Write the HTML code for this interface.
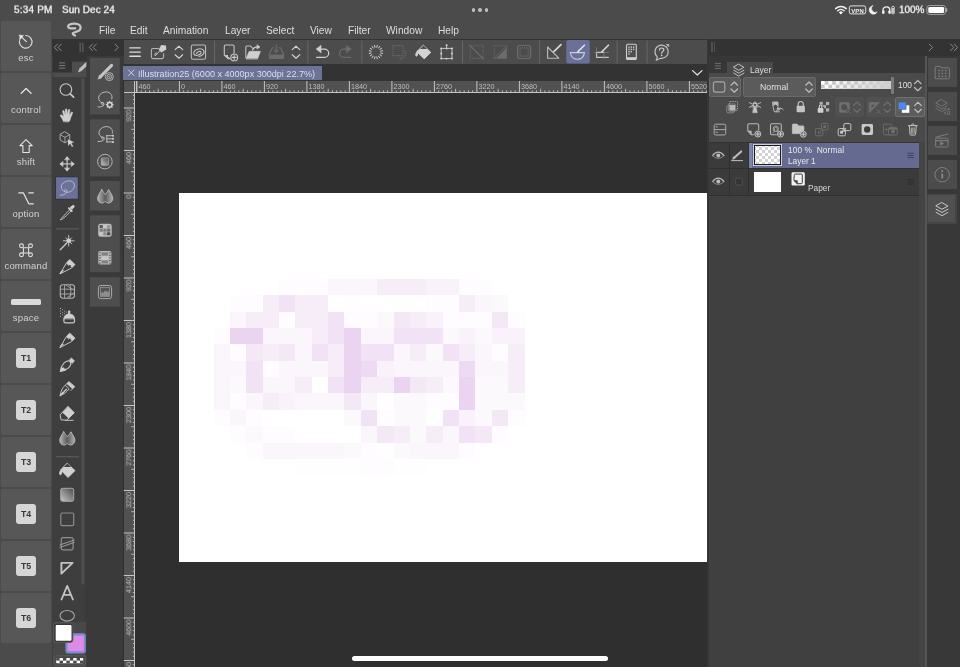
<!DOCTYPE html>
<html><head><meta charset="utf-8"><title>Clip Studio Paint</title>
<style>
html,body{margin:0;padding:0;background:#303030;}
body{width:960px;height:667px;position:relative;overflow:hidden;font-family:"Liberation Sans",sans-serif;}
#r{position:absolute;left:0;top:0;width:960px;height:667px;overflow:hidden;background:#303030;}
#r div,#r svg{position:absolute;}
#r div{box-sizing:border-box;}
.t{white-space:nowrap;line-height:1;will-change:transform;}
svg{overflow:visible;}
#r svg text{will-change:transform;}
#r svg.tx{will-change:transform;}
</style></head><body><div id="r">
<div style="left:0px;top:0px;width:960px;height:39px;background:#4b4b4b;"></div>
<div style="left:0px;top:39px;width:52px;height:628px;background:#4b4b4b;"></div>
<div style="left:52px;top:39px;width:908px;height:28px;background:#333333;"></div>
<div style="left:52px;top:56px;width:35px;height:611px;background:#3e3e3e;"></div>
<div style="left:85px;top:56px;width:39px;height:611px;background:#3a3a3a;"></div>
<div style="left:123px;top:64px;width:585px;height:603px;background:#2f2f2f;"></div>
<div style="left:123.5px;top:40px;width:584px;height:24px;background:#4c4c4c;"></div>
<div style="left:123px;top:64px;width:585px;height:17px;background:#333333;"></div>
<div style="left:122.8px;top:66.2px;width:199px;height:14.2px;background:#6d7397;"></div>
<div style="left:123.5px;top:81px;width:583.5px;height:12px;background:#515151;"></div>
<div style="left:123.5px;top:81px;width:11.5px;height:586px;background:#515151;"></div>
<div style="left:123.5px;top:91.7px;width:583.5px;height:1px;background:#c4c4c4;"></div>
<div style="left:134px;top:81px;width:1px;height:586px;background:#c4c4c4;"></div>
<div style="left:136px;top:81px;width:1px;height:11px;background:#c4c4c4;"></div>
<svg style="left:0px;top:0px;clip-path:inset(0 0 0 0);overflow:hidden;" width="707" height="100" viewBox="0 0 707 100"><rect x="136.40" y="81" width="1" height="11" fill="#c4c4c4"/><rect x="140.70" y="90.40" width="0.9" height="1.6" fill="#c4c4c4"/><rect x="144.95" y="90.40" width="0.9" height="1.6" fill="#c4c4c4"/><rect x="149.20" y="90.40" width="0.9" height="1.6" fill="#c4c4c4"/><rect x="153.45" y="90.40" width="0.9" height="1.6" fill="#c4c4c4"/><rect x="157.70" y="88.80" width="0.9" height="3.2" fill="#c4c4c4"/><rect x="161.95" y="90.40" width="0.9" height="1.6" fill="#c4c4c4"/><rect x="166.20" y="90.40" width="0.9" height="1.6" fill="#c4c4c4"/><rect x="170.45" y="90.40" width="0.9" height="1.6" fill="#c4c4c4"/><rect x="174.70" y="90.40" width="0.9" height="1.6" fill="#c4c4c4"/><text x="138.50" y="89.2" font-size="7.2" fill="#bdbdbd" font-family="Liberation Sans">460</text><rect x="178.90" y="81" width="1" height="11" fill="#c4c4c4"/><rect x="183.20" y="90.40" width="0.9" height="1.6" fill="#c4c4c4"/><rect x="187.45" y="90.40" width="0.9" height="1.6" fill="#c4c4c4"/><rect x="191.70" y="90.40" width="0.9" height="1.6" fill="#c4c4c4"/><rect x="195.95" y="90.40" width="0.9" height="1.6" fill="#c4c4c4"/><rect x="200.20" y="88.80" width="0.9" height="3.2" fill="#c4c4c4"/><rect x="204.45" y="90.40" width="0.9" height="1.6" fill="#c4c4c4"/><rect x="208.70" y="90.40" width="0.9" height="1.6" fill="#c4c4c4"/><rect x="212.95" y="90.40" width="0.9" height="1.6" fill="#c4c4c4"/><rect x="217.20" y="90.40" width="0.9" height="1.6" fill="#c4c4c4"/><text x="181.00" y="89.2" font-size="7.2" fill="#bdbdbd" font-family="Liberation Sans">0</text><rect x="221.40" y="81" width="1" height="11" fill="#c4c4c4"/><rect x="225.70" y="90.40" width="0.9" height="1.6" fill="#c4c4c4"/><rect x="229.95" y="90.40" width="0.9" height="1.6" fill="#c4c4c4"/><rect x="234.20" y="90.40" width="0.9" height="1.6" fill="#c4c4c4"/><rect x="238.45" y="90.40" width="0.9" height="1.6" fill="#c4c4c4"/><rect x="242.70" y="88.80" width="0.9" height="3.2" fill="#c4c4c4"/><rect x="246.95" y="90.40" width="0.9" height="1.6" fill="#c4c4c4"/><rect x="251.20" y="90.40" width="0.9" height="1.6" fill="#c4c4c4"/><rect x="255.45" y="90.40" width="0.9" height="1.6" fill="#c4c4c4"/><rect x="259.70" y="90.40" width="0.9" height="1.6" fill="#c4c4c4"/><text x="223.50" y="89.2" font-size="7.2" fill="#bdbdbd" font-family="Liberation Sans">460</text><rect x="263.90" y="81" width="1" height="11" fill="#c4c4c4"/><rect x="268.20" y="90.40" width="0.9" height="1.6" fill="#c4c4c4"/><rect x="272.45" y="90.40" width="0.9" height="1.6" fill="#c4c4c4"/><rect x="276.70" y="90.40" width="0.9" height="1.6" fill="#c4c4c4"/><rect x="280.95" y="90.40" width="0.9" height="1.6" fill="#c4c4c4"/><rect x="285.20" y="88.80" width="0.9" height="3.2" fill="#c4c4c4"/><rect x="289.45" y="90.40" width="0.9" height="1.6" fill="#c4c4c4"/><rect x="293.70" y="90.40" width="0.9" height="1.6" fill="#c4c4c4"/><rect x="297.95" y="90.40" width="0.9" height="1.6" fill="#c4c4c4"/><rect x="302.20" y="90.40" width="0.9" height="1.6" fill="#c4c4c4"/><text x="266.00" y="89.2" font-size="7.2" fill="#bdbdbd" font-family="Liberation Sans">920</text><rect x="306.40" y="81" width="1" height="11" fill="#c4c4c4"/><rect x="310.70" y="90.40" width="0.9" height="1.6" fill="#c4c4c4"/><rect x="314.95" y="90.40" width="0.9" height="1.6" fill="#c4c4c4"/><rect x="319.20" y="90.40" width="0.9" height="1.6" fill="#c4c4c4"/><rect x="323.45" y="90.40" width="0.9" height="1.6" fill="#c4c4c4"/><rect x="327.70" y="88.80" width="0.9" height="3.2" fill="#c4c4c4"/><rect x="331.95" y="90.40" width="0.9" height="1.6" fill="#c4c4c4"/><rect x="336.20" y="90.40" width="0.9" height="1.6" fill="#c4c4c4"/><rect x="340.45" y="90.40" width="0.9" height="1.6" fill="#c4c4c4"/><rect x="344.70" y="90.40" width="0.9" height="1.6" fill="#c4c4c4"/><text x="308.50" y="89.2" font-size="7.2" fill="#bdbdbd" font-family="Liberation Sans">1380</text><rect x="348.90" y="81" width="1" height="11" fill="#c4c4c4"/><rect x="353.20" y="90.40" width="0.9" height="1.6" fill="#c4c4c4"/><rect x="357.45" y="90.40" width="0.9" height="1.6" fill="#c4c4c4"/><rect x="361.70" y="90.40" width="0.9" height="1.6" fill="#c4c4c4"/><rect x="365.95" y="90.40" width="0.9" height="1.6" fill="#c4c4c4"/><rect x="370.20" y="88.80" width="0.9" height="3.2" fill="#c4c4c4"/><rect x="374.45" y="90.40" width="0.9" height="1.6" fill="#c4c4c4"/><rect x="378.70" y="90.40" width="0.9" height="1.6" fill="#c4c4c4"/><rect x="382.95" y="90.40" width="0.9" height="1.6" fill="#c4c4c4"/><rect x="387.20" y="90.40" width="0.9" height="1.6" fill="#c4c4c4"/><text x="351.00" y="89.2" font-size="7.2" fill="#bdbdbd" font-family="Liberation Sans">1840</text><rect x="391.40" y="81" width="1" height="11" fill="#c4c4c4"/><rect x="395.70" y="90.40" width="0.9" height="1.6" fill="#c4c4c4"/><rect x="399.95" y="90.40" width="0.9" height="1.6" fill="#c4c4c4"/><rect x="404.20" y="90.40" width="0.9" height="1.6" fill="#c4c4c4"/><rect x="408.45" y="90.40" width="0.9" height="1.6" fill="#c4c4c4"/><rect x="412.70" y="88.80" width="0.9" height="3.2" fill="#c4c4c4"/><rect x="416.95" y="90.40" width="0.9" height="1.6" fill="#c4c4c4"/><rect x="421.20" y="90.40" width="0.9" height="1.6" fill="#c4c4c4"/><rect x="425.45" y="90.40" width="0.9" height="1.6" fill="#c4c4c4"/><rect x="429.70" y="90.40" width="0.9" height="1.6" fill="#c4c4c4"/><text x="393.50" y="89.2" font-size="7.2" fill="#bdbdbd" font-family="Liberation Sans">2300</text><rect x="433.90" y="81" width="1" height="11" fill="#c4c4c4"/><rect x="438.20" y="90.40" width="0.9" height="1.6" fill="#c4c4c4"/><rect x="442.45" y="90.40" width="0.9" height="1.6" fill="#c4c4c4"/><rect x="446.70" y="90.40" width="0.9" height="1.6" fill="#c4c4c4"/><rect x="450.95" y="90.40" width="0.9" height="1.6" fill="#c4c4c4"/><rect x="455.20" y="88.80" width="0.9" height="3.2" fill="#c4c4c4"/><rect x="459.45" y="90.40" width="0.9" height="1.6" fill="#c4c4c4"/><rect x="463.70" y="90.40" width="0.9" height="1.6" fill="#c4c4c4"/><rect x="467.95" y="90.40" width="0.9" height="1.6" fill="#c4c4c4"/><rect x="472.20" y="90.40" width="0.9" height="1.6" fill="#c4c4c4"/><text x="436.00" y="89.2" font-size="7.2" fill="#bdbdbd" font-family="Liberation Sans">2760</text><rect x="476.40" y="81" width="1" height="11" fill="#c4c4c4"/><rect x="480.70" y="90.40" width="0.9" height="1.6" fill="#c4c4c4"/><rect x="484.95" y="90.40" width="0.9" height="1.6" fill="#c4c4c4"/><rect x="489.20" y="90.40" width="0.9" height="1.6" fill="#c4c4c4"/><rect x="493.45" y="90.40" width="0.9" height="1.6" fill="#c4c4c4"/><rect x="497.70" y="88.80" width="0.9" height="3.2" fill="#c4c4c4"/><rect x="501.95" y="90.40" width="0.9" height="1.6" fill="#c4c4c4"/><rect x="506.20" y="90.40" width="0.9" height="1.6" fill="#c4c4c4"/><rect x="510.45" y="90.40" width="0.9" height="1.6" fill="#c4c4c4"/><rect x="514.70" y="90.40" width="0.9" height="1.6" fill="#c4c4c4"/><text x="478.50" y="89.2" font-size="7.2" fill="#bdbdbd" font-family="Liberation Sans">3220</text><rect x="518.90" y="81" width="1" height="11" fill="#c4c4c4"/><rect x="523.20" y="90.40" width="0.9" height="1.6" fill="#c4c4c4"/><rect x="527.45" y="90.40" width="0.9" height="1.6" fill="#c4c4c4"/><rect x="531.70" y="90.40" width="0.9" height="1.6" fill="#c4c4c4"/><rect x="535.95" y="90.40" width="0.9" height="1.6" fill="#c4c4c4"/><rect x="540.20" y="88.80" width="0.9" height="3.2" fill="#c4c4c4"/><rect x="544.45" y="90.40" width="0.9" height="1.6" fill="#c4c4c4"/><rect x="548.70" y="90.40" width="0.9" height="1.6" fill="#c4c4c4"/><rect x="552.95" y="90.40" width="0.9" height="1.6" fill="#c4c4c4"/><rect x="557.20" y="90.40" width="0.9" height="1.6" fill="#c4c4c4"/><text x="521.00" y="89.2" font-size="7.2" fill="#bdbdbd" font-family="Liberation Sans">3680</text><rect x="561.40" y="81" width="1" height="11" fill="#c4c4c4"/><rect x="565.70" y="90.40" width="0.9" height="1.6" fill="#c4c4c4"/><rect x="569.95" y="90.40" width="0.9" height="1.6" fill="#c4c4c4"/><rect x="574.20" y="90.40" width="0.9" height="1.6" fill="#c4c4c4"/><rect x="578.45" y="90.40" width="0.9" height="1.6" fill="#c4c4c4"/><rect x="582.70" y="88.80" width="0.9" height="3.2" fill="#c4c4c4"/><rect x="586.95" y="90.40" width="0.9" height="1.6" fill="#c4c4c4"/><rect x="591.20" y="90.40" width="0.9" height="1.6" fill="#c4c4c4"/><rect x="595.45" y="90.40" width="0.9" height="1.6" fill="#c4c4c4"/><rect x="599.70" y="90.40" width="0.9" height="1.6" fill="#c4c4c4"/><text x="563.50" y="89.2" font-size="7.2" fill="#bdbdbd" font-family="Liberation Sans">4140</text><rect x="603.90" y="81" width="1" height="11" fill="#c4c4c4"/><rect x="608.20" y="90.40" width="0.9" height="1.6" fill="#c4c4c4"/><rect x="612.45" y="90.40" width="0.9" height="1.6" fill="#c4c4c4"/><rect x="616.70" y="90.40" width="0.9" height="1.6" fill="#c4c4c4"/><rect x="620.95" y="90.40" width="0.9" height="1.6" fill="#c4c4c4"/><rect x="625.20" y="88.80" width="0.9" height="3.2" fill="#c4c4c4"/><rect x="629.45" y="90.40" width="0.9" height="1.6" fill="#c4c4c4"/><rect x="633.70" y="90.40" width="0.9" height="1.6" fill="#c4c4c4"/><rect x="637.95" y="90.40" width="0.9" height="1.6" fill="#c4c4c4"/><rect x="642.20" y="90.40" width="0.9" height="1.6" fill="#c4c4c4"/><text x="606.00" y="89.2" font-size="7.2" fill="#bdbdbd" font-family="Liberation Sans">4600</text><rect x="646.40" y="81" width="1" height="11" fill="#c4c4c4"/><rect x="650.70" y="90.40" width="0.9" height="1.6" fill="#c4c4c4"/><rect x="654.95" y="90.40" width="0.9" height="1.6" fill="#c4c4c4"/><rect x="659.20" y="90.40" width="0.9" height="1.6" fill="#c4c4c4"/><rect x="663.45" y="90.40" width="0.9" height="1.6" fill="#c4c4c4"/><rect x="667.70" y="88.80" width="0.9" height="3.2" fill="#c4c4c4"/><rect x="671.95" y="90.40" width="0.9" height="1.6" fill="#c4c4c4"/><rect x="676.20" y="90.40" width="0.9" height="1.6" fill="#c4c4c4"/><rect x="680.45" y="90.40" width="0.9" height="1.6" fill="#c4c4c4"/><rect x="684.70" y="90.40" width="0.9" height="1.6" fill="#c4c4c4"/><text x="648.50" y="89.2" font-size="7.2" fill="#bdbdbd" font-family="Liberation Sans">5060</text><rect x="688.90" y="81" width="1" height="11" fill="#c4c4c4"/><rect x="693.20" y="90.40" width="0.9" height="1.6" fill="#c4c4c4"/><rect x="697.45" y="90.40" width="0.9" height="1.6" fill="#c4c4c4"/><rect x="701.70" y="90.40" width="0.9" height="1.6" fill="#c4c4c4"/><rect x="705.95" y="90.40" width="0.9" height="1.6" fill="#c4c4c4"/><text x="691.00" y="89.2" font-size="7.2" fill="#bdbdbd" font-family="Liberation Sans">5520</text></svg>
<svg style="left:0;top:0;overflow:hidden" width="136" height="667" viewBox="0 0 136 667"><defs><clipPath id="vr"><rect x="123.5" y="93" width="12" height="574"/></clipPath></defs><g clip-path="url(#vr)"><rect x="132.90" y="94.80" width="1.6" height="0.9" fill="#c4c4c4"/><rect x="132.90" y="99.05" width="1.6" height="0.9" fill="#c4c4c4"/><rect x="132.90" y="103.30" width="1.6" height="0.9" fill="#c4c4c4"/><text transform="translate(131.2,67.10) rotate(-90)" text-anchor="end" font-size="7.2" fill="#bdbdbd" font-family="Liberation Sans">1380</text><rect x="123.5" y="107.50" width="11" height="1" fill="#c4c4c4"/><rect x="132.90" y="111.80" width="1.6" height="0.9" fill="#c4c4c4"/><rect x="132.90" y="116.05" width="1.6" height="0.9" fill="#c4c4c4"/><rect x="132.90" y="120.30" width="1.6" height="0.9" fill="#c4c4c4"/><rect x="132.90" y="124.55" width="1.6" height="0.9" fill="#c4c4c4"/><rect x="131.30" y="128.80" width="3.2" height="0.9" fill="#c4c4c4"/><rect x="132.90" y="133.05" width="1.6" height="0.9" fill="#c4c4c4"/><rect x="132.90" y="137.30" width="1.6" height="0.9" fill="#c4c4c4"/><rect x="132.90" y="141.55" width="1.6" height="0.9" fill="#c4c4c4"/><rect x="132.90" y="145.80" width="1.6" height="0.9" fill="#c4c4c4"/><text transform="translate(131.2,109.60) rotate(-90)" text-anchor="end" font-size="7.2" fill="#bdbdbd" font-family="Liberation Sans">920</text><rect x="123.5" y="150.00" width="11" height="1" fill="#c4c4c4"/><rect x="132.90" y="154.30" width="1.6" height="0.9" fill="#c4c4c4"/><rect x="132.90" y="158.55" width="1.6" height="0.9" fill="#c4c4c4"/><rect x="132.90" y="162.80" width="1.6" height="0.9" fill="#c4c4c4"/><rect x="132.90" y="167.05" width="1.6" height="0.9" fill="#c4c4c4"/><rect x="131.30" y="171.30" width="3.2" height="0.9" fill="#c4c4c4"/><rect x="132.90" y="175.55" width="1.6" height="0.9" fill="#c4c4c4"/><rect x="132.90" y="179.80" width="1.6" height="0.9" fill="#c4c4c4"/><rect x="132.90" y="184.05" width="1.6" height="0.9" fill="#c4c4c4"/><rect x="132.90" y="188.30" width="1.6" height="0.9" fill="#c4c4c4"/><text transform="translate(131.2,152.10) rotate(-90)" text-anchor="end" font-size="7.2" fill="#bdbdbd" font-family="Liberation Sans">460</text><rect x="123.5" y="192.50" width="11" height="1" fill="#c4c4c4"/><rect x="132.90" y="196.80" width="1.6" height="0.9" fill="#c4c4c4"/><rect x="132.90" y="201.05" width="1.6" height="0.9" fill="#c4c4c4"/><rect x="132.90" y="205.30" width="1.6" height="0.9" fill="#c4c4c4"/><rect x="132.90" y="209.55" width="1.6" height="0.9" fill="#c4c4c4"/><rect x="131.30" y="213.80" width="3.2" height="0.9" fill="#c4c4c4"/><rect x="132.90" y="218.05" width="1.6" height="0.9" fill="#c4c4c4"/><rect x="132.90" y="222.30" width="1.6" height="0.9" fill="#c4c4c4"/><rect x="132.90" y="226.55" width="1.6" height="0.9" fill="#c4c4c4"/><rect x="132.90" y="230.80" width="1.6" height="0.9" fill="#c4c4c4"/><text transform="translate(131.2,194.60) rotate(-90)" text-anchor="end" font-size="7.2" fill="#bdbdbd" font-family="Liberation Sans">0</text><rect x="123.5" y="235.00" width="11" height="1" fill="#c4c4c4"/><rect x="132.90" y="239.30" width="1.6" height="0.9" fill="#c4c4c4"/><rect x="132.90" y="243.55" width="1.6" height="0.9" fill="#c4c4c4"/><rect x="132.90" y="247.80" width="1.6" height="0.9" fill="#c4c4c4"/><rect x="132.90" y="252.05" width="1.6" height="0.9" fill="#c4c4c4"/><rect x="131.30" y="256.30" width="3.2" height="0.9" fill="#c4c4c4"/><rect x="132.90" y="260.55" width="1.6" height="0.9" fill="#c4c4c4"/><rect x="132.90" y="264.80" width="1.6" height="0.9" fill="#c4c4c4"/><rect x="132.90" y="269.05" width="1.6" height="0.9" fill="#c4c4c4"/><rect x="132.90" y="273.30" width="1.6" height="0.9" fill="#c4c4c4"/><text transform="translate(131.2,237.10) rotate(-90)" text-anchor="end" font-size="7.2" fill="#bdbdbd" font-family="Liberation Sans">460</text><rect x="123.5" y="277.50" width="11" height="1" fill="#c4c4c4"/><rect x="132.90" y="281.80" width="1.6" height="0.9" fill="#c4c4c4"/><rect x="132.90" y="286.05" width="1.6" height="0.9" fill="#c4c4c4"/><rect x="132.90" y="290.30" width="1.6" height="0.9" fill="#c4c4c4"/><rect x="132.90" y="294.55" width="1.6" height="0.9" fill="#c4c4c4"/><rect x="131.30" y="298.80" width="3.2" height="0.9" fill="#c4c4c4"/><rect x="132.90" y="303.05" width="1.6" height="0.9" fill="#c4c4c4"/><rect x="132.90" y="307.30" width="1.6" height="0.9" fill="#c4c4c4"/><rect x="132.90" y="311.55" width="1.6" height="0.9" fill="#c4c4c4"/><rect x="132.90" y="315.80" width="1.6" height="0.9" fill="#c4c4c4"/><text transform="translate(131.2,279.60) rotate(-90)" text-anchor="end" font-size="7.2" fill="#bdbdbd" font-family="Liberation Sans">920</text><rect x="123.5" y="320.00" width="11" height="1" fill="#c4c4c4"/><rect x="132.90" y="324.30" width="1.6" height="0.9" fill="#c4c4c4"/><rect x="132.90" y="328.55" width="1.6" height="0.9" fill="#c4c4c4"/><rect x="132.90" y="332.80" width="1.6" height="0.9" fill="#c4c4c4"/><rect x="132.90" y="337.05" width="1.6" height="0.9" fill="#c4c4c4"/><rect x="131.30" y="341.30" width="3.2" height="0.9" fill="#c4c4c4"/><rect x="132.90" y="345.55" width="1.6" height="0.9" fill="#c4c4c4"/><rect x="132.90" y="349.80" width="1.6" height="0.9" fill="#c4c4c4"/><rect x="132.90" y="354.05" width="1.6" height="0.9" fill="#c4c4c4"/><rect x="132.90" y="358.30" width="1.6" height="0.9" fill="#c4c4c4"/><text transform="translate(131.2,322.10) rotate(-90)" text-anchor="end" font-size="7.2" fill="#bdbdbd" font-family="Liberation Sans">1380</text><rect x="123.5" y="362.50" width="11" height="1" fill="#c4c4c4"/><rect x="132.90" y="366.80" width="1.6" height="0.9" fill="#c4c4c4"/><rect x="132.90" y="371.05" width="1.6" height="0.9" fill="#c4c4c4"/><rect x="132.90" y="375.30" width="1.6" height="0.9" fill="#c4c4c4"/><rect x="132.90" y="379.55" width="1.6" height="0.9" fill="#c4c4c4"/><rect x="131.30" y="383.80" width="3.2" height="0.9" fill="#c4c4c4"/><rect x="132.90" y="388.05" width="1.6" height="0.9" fill="#c4c4c4"/><rect x="132.90" y="392.30" width="1.6" height="0.9" fill="#c4c4c4"/><rect x="132.90" y="396.55" width="1.6" height="0.9" fill="#c4c4c4"/><rect x="132.90" y="400.80" width="1.6" height="0.9" fill="#c4c4c4"/><text transform="translate(131.2,364.60) rotate(-90)" text-anchor="end" font-size="7.2" fill="#bdbdbd" font-family="Liberation Sans">1840</text><rect x="123.5" y="405.00" width="11" height="1" fill="#c4c4c4"/><rect x="132.90" y="409.30" width="1.6" height="0.9" fill="#c4c4c4"/><rect x="132.90" y="413.55" width="1.6" height="0.9" fill="#c4c4c4"/><rect x="132.90" y="417.80" width="1.6" height="0.9" fill="#c4c4c4"/><rect x="132.90" y="422.05" width="1.6" height="0.9" fill="#c4c4c4"/><rect x="131.30" y="426.30" width="3.2" height="0.9" fill="#c4c4c4"/><rect x="132.90" y="430.55" width="1.6" height="0.9" fill="#c4c4c4"/><rect x="132.90" y="434.80" width="1.6" height="0.9" fill="#c4c4c4"/><rect x="132.90" y="439.05" width="1.6" height="0.9" fill="#c4c4c4"/><rect x="132.90" y="443.30" width="1.6" height="0.9" fill="#c4c4c4"/><text transform="translate(131.2,407.10) rotate(-90)" text-anchor="end" font-size="7.2" fill="#bdbdbd" font-family="Liberation Sans">2300</text><rect x="123.5" y="447.50" width="11" height="1" fill="#c4c4c4"/><rect x="132.90" y="451.80" width="1.6" height="0.9" fill="#c4c4c4"/><rect x="132.90" y="456.05" width="1.6" height="0.9" fill="#c4c4c4"/><rect x="132.90" y="460.30" width="1.6" height="0.9" fill="#c4c4c4"/><rect x="132.90" y="464.55" width="1.6" height="0.9" fill="#c4c4c4"/><rect x="131.30" y="468.80" width="3.2" height="0.9" fill="#c4c4c4"/><rect x="132.90" y="473.05" width="1.6" height="0.9" fill="#c4c4c4"/><rect x="132.90" y="477.30" width="1.6" height="0.9" fill="#c4c4c4"/><rect x="132.90" y="481.55" width="1.6" height="0.9" fill="#c4c4c4"/><rect x="132.90" y="485.80" width="1.6" height="0.9" fill="#c4c4c4"/><text transform="translate(131.2,449.60) rotate(-90)" text-anchor="end" font-size="7.2" fill="#bdbdbd" font-family="Liberation Sans">2760</text><rect x="123.5" y="490.00" width="11" height="1" fill="#c4c4c4"/><rect x="132.90" y="494.30" width="1.6" height="0.9" fill="#c4c4c4"/><rect x="132.90" y="498.55" width="1.6" height="0.9" fill="#c4c4c4"/><rect x="132.90" y="502.80" width="1.6" height="0.9" fill="#c4c4c4"/><rect x="132.90" y="507.05" width="1.6" height="0.9" fill="#c4c4c4"/><rect x="131.30" y="511.30" width="3.2" height="0.9" fill="#c4c4c4"/><rect x="132.90" y="515.55" width="1.6" height="0.9" fill="#c4c4c4"/><rect x="132.90" y="519.80" width="1.6" height="0.9" fill="#c4c4c4"/><rect x="132.90" y="524.05" width="1.6" height="0.9" fill="#c4c4c4"/><rect x="132.90" y="528.30" width="1.6" height="0.9" fill="#c4c4c4"/><text transform="translate(131.2,492.10) rotate(-90)" text-anchor="end" font-size="7.2" fill="#bdbdbd" font-family="Liberation Sans">3220</text><rect x="123.5" y="532.50" width="11" height="1" fill="#c4c4c4"/><rect x="132.90" y="536.80" width="1.6" height="0.9" fill="#c4c4c4"/><rect x="132.90" y="541.05" width="1.6" height="0.9" fill="#c4c4c4"/><rect x="132.90" y="545.30" width="1.6" height="0.9" fill="#c4c4c4"/><rect x="132.90" y="549.55" width="1.6" height="0.9" fill="#c4c4c4"/><rect x="131.30" y="553.80" width="3.2" height="0.9" fill="#c4c4c4"/><rect x="132.90" y="558.05" width="1.6" height="0.9" fill="#c4c4c4"/><rect x="132.90" y="562.30" width="1.6" height="0.9" fill="#c4c4c4"/><rect x="132.90" y="566.55" width="1.6" height="0.9" fill="#c4c4c4"/><rect x="132.90" y="570.80" width="1.6" height="0.9" fill="#c4c4c4"/><text transform="translate(131.2,534.60) rotate(-90)" text-anchor="end" font-size="7.2" fill="#bdbdbd" font-family="Liberation Sans">3680</text><rect x="123.5" y="575.00" width="11" height="1" fill="#c4c4c4"/><rect x="132.90" y="579.30" width="1.6" height="0.9" fill="#c4c4c4"/><rect x="132.90" y="583.55" width="1.6" height="0.9" fill="#c4c4c4"/><rect x="132.90" y="587.80" width="1.6" height="0.9" fill="#c4c4c4"/><rect x="132.90" y="592.05" width="1.6" height="0.9" fill="#c4c4c4"/><rect x="131.30" y="596.30" width="3.2" height="0.9" fill="#c4c4c4"/><rect x="132.90" y="600.55" width="1.6" height="0.9" fill="#c4c4c4"/><rect x="132.90" y="604.80" width="1.6" height="0.9" fill="#c4c4c4"/><rect x="132.90" y="609.05" width="1.6" height="0.9" fill="#c4c4c4"/><rect x="132.90" y="613.30" width="1.6" height="0.9" fill="#c4c4c4"/><text transform="translate(131.2,577.10) rotate(-90)" text-anchor="end" font-size="7.2" fill="#bdbdbd" font-family="Liberation Sans">4140</text><rect x="123.5" y="617.50" width="11" height="1" fill="#c4c4c4"/><rect x="132.90" y="621.80" width="1.6" height="0.9" fill="#c4c4c4"/><rect x="132.90" y="626.05" width="1.6" height="0.9" fill="#c4c4c4"/><rect x="132.90" y="630.30" width="1.6" height="0.9" fill="#c4c4c4"/><rect x="132.90" y="634.55" width="1.6" height="0.9" fill="#c4c4c4"/><rect x="131.30" y="638.80" width="3.2" height="0.9" fill="#c4c4c4"/><rect x="132.90" y="643.05" width="1.6" height="0.9" fill="#c4c4c4"/><rect x="132.90" y="647.30" width="1.6" height="0.9" fill="#c4c4c4"/><rect x="132.90" y="651.55" width="1.6" height="0.9" fill="#c4c4c4"/><rect x="132.90" y="655.80" width="1.6" height="0.9" fill="#c4c4c4"/><text transform="translate(131.2,619.60) rotate(-90)" text-anchor="end" font-size="7.2" fill="#bdbdbd" font-family="Liberation Sans">4600</text><rect x="123.5" y="660.00" width="11" height="1" fill="#c4c4c4"/><rect x="132.90" y="664.30" width="1.6" height="0.9" fill="#c4c4c4"/><text transform="translate(131.2,662.10) rotate(-90)" text-anchor="end" font-size="7.2" fill="#bdbdbd" font-family="Liberation Sans">5060</text><text transform="translate(131.2,704.60) rotate(-90)" text-anchor="end" font-size="7.2" fill="#bdbdbd" font-family="Liberation Sans">5520</text></g></svg>
<div style="left:178.75px;top:192.5px;width:528.25px;height:369.5px;background:#ffffff;"></div>
<div style="left:707px;top:39px;width:1.8px;height:628px;background:#363636;"></div>
<svg style="left:0;top:0" width="707" height="667" viewBox="0 0 707 667" shape-rendering="crispEdges"><rect x="278.98" y="278.80" width="16.42" height="16.42" fill="#fefcfe"/><rect x="295.35" y="278.80" width="16.42" height="16.42" fill="#fefcfe"/><rect x="311.72" y="278.80" width="16.42" height="16.42" fill="#fefcfe"/><rect x="328.09" y="278.80" width="16.42" height="16.42" fill="#fbf6fc"/><rect x="344.46" y="278.80" width="16.42" height="16.42" fill="#fbf6fc"/><rect x="360.83" y="278.80" width="16.42" height="16.42" fill="#fbf6fc"/><rect x="377.20" y="278.80" width="16.42" height="16.42" fill="#f6edf9"/><rect x="393.57" y="278.80" width="16.42" height="16.42" fill="#f6edf9"/><rect x="409.94" y="278.80" width="16.42" height="16.42" fill="#f6edf9"/><rect x="426.31" y="278.80" width="16.42" height="16.42" fill="#f9f2fb"/><rect x="442.68" y="278.80" width="16.42" height="16.42" fill="#f9f2fb"/><rect x="459.05" y="278.80" width="16.42" height="16.42" fill="#fefcfe"/><rect x="475.42" y="278.80" width="16.42" height="16.42" fill="#fefcfe"/><rect x="229.87" y="295.17" width="16.42" height="16.42" fill="#fefcfe"/><rect x="246.24" y="295.17" width="16.42" height="16.42" fill="#fefcfe"/><rect x="262.61" y="295.17" width="16.42" height="16.42" fill="#f6edf9"/><rect x="278.98" y="295.17" width="16.42" height="16.42" fill="#f1e2f5"/><rect x="295.35" y="295.17" width="16.42" height="16.42" fill="#f6edf9"/><rect x="311.72" y="295.17" width="16.42" height="16.42" fill="#f6edf9"/><rect x="344.46" y="295.17" width="16.42" height="16.42" fill="#fffeff"/><rect x="426.31" y="295.17" width="16.42" height="16.42" fill="#fefcfe"/><rect x="442.68" y="295.17" width="16.42" height="16.42" fill="#fefcfe"/><rect x="459.05" y="295.17" width="16.42" height="16.42" fill="#f6edf9"/><rect x="475.42" y="295.17" width="16.42" height="16.42" fill="#fbf6fc"/><rect x="491.79" y="295.17" width="16.42" height="16.42" fill="#fcf9fd"/><rect x="229.87" y="311.54" width="16.42" height="16.42" fill="#fbf6fc"/><rect x="246.24" y="311.54" width="16.42" height="16.42" fill="#f6edf9"/><rect x="262.61" y="311.54" width="16.42" height="16.42" fill="#f6edf9"/><rect x="278.98" y="311.54" width="16.42" height="16.42" fill="#fefcfe"/><rect x="295.35" y="311.54" width="16.42" height="16.42" fill="#f6edf9"/><rect x="311.72" y="311.54" width="16.42" height="16.42" fill="#f6edf9"/><rect x="328.09" y="311.54" width="16.42" height="16.42" fill="#f1e2f5"/><rect x="344.46" y="311.54" width="16.42" height="16.42" fill="#fefcfe"/><rect x="360.83" y="311.54" width="16.42" height="16.42" fill="#fefcfe"/><rect x="377.20" y="311.54" width="16.42" height="16.42" fill="#fcf9fd"/><rect x="393.57" y="311.54" width="16.42" height="16.42" fill="#f4e8f7"/><rect x="409.94" y="311.54" width="16.42" height="16.42" fill="#f6edf9"/><rect x="426.31" y="311.54" width="16.42" height="16.42" fill="#f9f2fb"/><rect x="442.68" y="311.54" width="16.42" height="16.42" fill="#fefcfe"/><rect x="459.05" y="311.54" width="16.42" height="16.42" fill="#fefcfe"/><rect x="475.42" y="311.54" width="16.42" height="16.42" fill="#fefcfe"/><rect x="491.79" y="311.54" width="16.42" height="16.42" fill="#f4e8f7"/><rect x="508.16" y="311.54" width="16.42" height="16.42" fill="#fefcfe"/><rect x="213.50" y="327.91" width="16.42" height="16.42" fill="#fefcfe"/><rect x="229.87" y="327.91" width="16.42" height="16.42" fill="#ead4f1"/><rect x="246.24" y="327.91" width="16.42" height="16.42" fill="#ead4f1"/><rect x="262.61" y="327.91" width="16.42" height="16.42" fill="#fbf6fc"/><rect x="278.98" y="327.91" width="16.42" height="16.42" fill="#fbf6fc"/><rect x="295.35" y="327.91" width="16.42" height="16.42" fill="#fbf6fc"/><rect x="311.72" y="327.91" width="16.42" height="16.42" fill="#f6edf9"/><rect x="328.09" y="327.91" width="16.42" height="16.42" fill="#f1e2f5"/><rect x="344.46" y="327.91" width="16.42" height="16.42" fill="#ead4f1"/><rect x="360.83" y="327.91" width="16.42" height="16.42" fill="#fbf6fc"/><rect x="377.20" y="327.91" width="16.42" height="16.42" fill="#fbf6fc"/><rect x="393.57" y="327.91" width="16.42" height="16.42" fill="#f1e2f5"/><rect x="409.94" y="327.91" width="16.42" height="16.42" fill="#f1e2f5"/><rect x="426.31" y="327.91" width="16.42" height="16.42" fill="#f1e2f5"/><rect x="442.68" y="327.91" width="16.42" height="16.42" fill="#fcf9fd"/><rect x="459.05" y="327.91" width="16.42" height="16.42" fill="#f9f2fb"/><rect x="475.42" y="327.91" width="16.42" height="16.42" fill="#fcf9fd"/><rect x="491.79" y="327.91" width="16.42" height="16.42" fill="#f9f2fb"/><rect x="508.16" y="327.91" width="16.42" height="16.42" fill="#f9f2fb"/><rect x="213.50" y="344.28" width="16.42" height="16.42" fill="#fbf6fc"/><rect x="229.87" y="344.28" width="16.42" height="16.42" fill="#fefcfe"/><rect x="246.24" y="344.28" width="16.42" height="16.42" fill="#f4e8f7"/><rect x="262.61" y="344.28" width="16.42" height="16.42" fill="#f6edf9"/><rect x="278.98" y="344.28" width="16.42" height="16.42" fill="#f4e8f7"/><rect x="295.35" y="344.28" width="16.42" height="16.42" fill="#fbf6fc"/><rect x="311.72" y="344.28" width="16.42" height="16.42" fill="#f1e2f5"/><rect x="328.09" y="344.28" width="16.42" height="16.42" fill="#f6edf9"/><rect x="344.46" y="344.28" width="16.42" height="16.42" fill="#ead4f1"/><rect x="360.83" y="344.28" width="16.42" height="16.42" fill="#f1e2f5"/><rect x="377.20" y="344.28" width="16.42" height="16.42" fill="#f1e2f5"/><rect x="393.57" y="344.28" width="16.42" height="16.42" fill="#fbf6fc"/><rect x="409.94" y="344.28" width="16.42" height="16.42" fill="#f6edf9"/><rect x="426.31" y="344.28" width="16.42" height="16.42" fill="#fcf9fd"/><rect x="442.68" y="344.28" width="16.42" height="16.42" fill="#f1e2f5"/><rect x="459.05" y="344.28" width="16.42" height="16.42" fill="#f6edf9"/><rect x="475.42" y="344.28" width="16.42" height="16.42" fill="#fbf6fc"/><rect x="491.79" y="344.28" width="16.42" height="16.42" fill="#fefcfe"/><rect x="508.16" y="344.28" width="16.42" height="16.42" fill="#f6edf9"/><rect x="213.50" y="360.65" width="16.42" height="16.42" fill="#fbf6fc"/><rect x="229.87" y="360.65" width="16.42" height="16.42" fill="#fbf6fc"/><rect x="246.24" y="360.65" width="16.42" height="16.42" fill="#f1e2f5"/><rect x="262.61" y="360.65" width="16.42" height="16.42" fill="#fefcfe"/><rect x="278.98" y="360.65" width="16.42" height="16.42" fill="#fbf6fc"/><rect x="295.35" y="360.65" width="16.42" height="16.42" fill="#fbf6fc"/><rect x="311.72" y="360.65" width="16.42" height="16.42" fill="#fbf6fc"/><rect x="328.09" y="360.65" width="16.42" height="16.42" fill="#f6edf9"/><rect x="344.46" y="360.65" width="16.42" height="16.42" fill="#ead4f1"/><rect x="360.83" y="360.65" width="16.42" height="16.42" fill="#eddbf3"/><rect x="377.20" y="360.65" width="16.42" height="16.42" fill="#f9f2fb"/><rect x="393.57" y="360.65" width="16.42" height="16.42" fill="#fbf6fc"/><rect x="409.94" y="360.65" width="16.42" height="16.42" fill="#fbf6fc"/><rect x="426.31" y="360.65" width="16.42" height="16.42" fill="#fbf6fc"/><rect x="442.68" y="360.65" width="16.42" height="16.42" fill="#fbf6fc"/><rect x="459.05" y="360.65" width="16.42" height="16.42" fill="#eddbf3"/><rect x="475.42" y="360.65" width="16.42" height="16.42" fill="#fbf6fc"/><rect x="491.79" y="360.65" width="16.42" height="16.42" fill="#fbf6fc"/><rect x="508.16" y="360.65" width="16.42" height="16.42" fill="#f6edf9"/><rect x="213.50" y="377.02" width="16.42" height="16.42" fill="#fbf6fc"/><rect x="229.87" y="377.02" width="16.42" height="16.42" fill="#fcf9fd"/><rect x="246.24" y="377.02" width="16.42" height="16.42" fill="#f1e2f5"/><rect x="262.61" y="377.02" width="16.42" height="16.42" fill="#fbf6fc"/><rect x="278.98" y="377.02" width="16.42" height="16.42" fill="#fbf6fc"/><rect x="295.35" y="377.02" width="16.42" height="16.42" fill="#f6edf9"/><rect x="311.72" y="377.02" width="16.42" height="16.42" fill="#fffeff"/><rect x="328.09" y="377.02" width="16.42" height="16.42" fill="#f1e2f5"/><rect x="344.46" y="377.02" width="16.42" height="16.42" fill="#ead4f1"/><rect x="360.83" y="377.02" width="16.42" height="16.42" fill="#f6edf9"/><rect x="377.20" y="377.02" width="16.42" height="16.42" fill="#f6edf9"/><rect x="393.57" y="377.02" width="16.42" height="16.42" fill="#ead4f1"/><rect x="409.94" y="377.02" width="16.42" height="16.42" fill="#f4e8f7"/><rect x="426.31" y="377.02" width="16.42" height="16.42" fill="#f6edf9"/><rect x="442.68" y="377.02" width="16.42" height="16.42" fill="#fcf9fd"/><rect x="459.05" y="377.02" width="16.42" height="16.42" fill="#ead4f1"/><rect x="475.42" y="377.02" width="16.42" height="16.42" fill="#fcf9fd"/><rect x="491.79" y="377.02" width="16.42" height="16.42" fill="#fcf9fd"/><rect x="508.16" y="377.02" width="16.42" height="16.42" fill="#f6edf9"/><rect x="213.50" y="393.39" width="16.42" height="16.42" fill="#fbf6fc"/><rect x="229.87" y="393.39" width="16.42" height="16.42" fill="#fefcfe"/><rect x="246.24" y="393.39" width="16.42" height="16.42" fill="#fbf6fc"/><rect x="262.61" y="393.39" width="16.42" height="16.42" fill="#f6edf9"/><rect x="278.98" y="393.39" width="16.42" height="16.42" fill="#f9f2fb"/><rect x="295.35" y="393.39" width="16.42" height="16.42" fill="#fbf6fc"/><rect x="311.72" y="393.39" width="16.42" height="16.42" fill="#fbf6fc"/><rect x="328.09" y="393.39" width="16.42" height="16.42" fill="#fbf6fc"/><rect x="344.46" y="393.39" width="16.42" height="16.42" fill="#f4e8f7"/><rect x="360.83" y="393.39" width="16.42" height="16.42" fill="#fbf6fc"/><rect x="393.57" y="393.39" width="16.42" height="16.42" fill="#fcf9fd"/><rect x="409.94" y="393.39" width="16.42" height="16.42" fill="#fcf9fd"/><rect x="426.31" y="393.39" width="16.42" height="16.42" fill="#fefcfe"/><rect x="442.68" y="393.39" width="16.42" height="16.42" fill="#fefcfe"/><rect x="459.05" y="393.39" width="16.42" height="16.42" fill="#ead4f1"/><rect x="475.42" y="393.39" width="16.42" height="16.42" fill="#fcf9fd"/><rect x="491.79" y="393.39" width="16.42" height="16.42" fill="#fcf9fd"/><rect x="508.16" y="393.39" width="16.42" height="16.42" fill="#fcf9fd"/><rect x="213.50" y="409.76" width="16.42" height="16.42" fill="#fefcfe"/><rect x="229.87" y="409.76" width="16.42" height="16.42" fill="#fbf6fc"/><rect x="246.24" y="409.76" width="16.42" height="16.42" fill="#fefcfe"/><rect x="344.46" y="409.76" width="16.42" height="16.42" fill="#fcf9fd"/><rect x="360.83" y="409.76" width="16.42" height="16.42" fill="#f1e2f5"/><rect x="377.20" y="409.76" width="16.42" height="16.42" fill="#fefcfe"/><rect x="393.57" y="409.76" width="16.42" height="16.42" fill="#fcf9fd"/><rect x="409.94" y="409.76" width="16.42" height="16.42" fill="#fcf9fd"/><rect x="426.31" y="409.76" width="16.42" height="16.42" fill="#fffeff"/><rect x="442.68" y="409.76" width="16.42" height="16.42" fill="#f1e2f5"/><rect x="459.05" y="409.76" width="16.42" height="16.42" fill="#f9f2fb"/><rect x="475.42" y="409.76" width="16.42" height="16.42" fill="#fcf9fd"/><rect x="491.79" y="409.76" width="16.42" height="16.42" fill="#f4e8f7"/><rect x="508.16" y="409.76" width="16.42" height="16.42" fill="#fefcfe"/><rect x="229.87" y="426.13" width="16.42" height="16.42" fill="#fefcfe"/><rect x="246.24" y="426.13" width="16.42" height="16.42" fill="#fcf9fd"/><rect x="262.61" y="426.13" width="16.42" height="16.42" fill="#fefcfe"/><rect x="278.98" y="426.13" width="16.42" height="16.42" fill="#fefcfe"/><rect x="360.83" y="426.13" width="16.42" height="16.42" fill="#fbf6fc"/><rect x="377.20" y="426.13" width="16.42" height="16.42" fill="#f4e8f7"/><rect x="393.57" y="426.13" width="16.42" height="16.42" fill="#f6edf9"/><rect x="409.94" y="426.13" width="16.42" height="16.42" fill="#fcf9fd"/><rect x="426.31" y="426.13" width="16.42" height="16.42" fill="#f6edf9"/><rect x="442.68" y="426.13" width="16.42" height="16.42" fill="#fbf6fc"/><rect x="459.05" y="426.13" width="16.42" height="16.42" fill="#f1e2f5"/><rect x="475.42" y="426.13" width="16.42" height="16.42" fill="#f4e8f7"/><rect x="491.79" y="426.13" width="16.42" height="16.42" fill="#fefcfe"/><rect x="246.24" y="442.50" width="16.42" height="16.42" fill="#fefcfe"/><rect x="262.61" y="442.50" width="16.42" height="16.42" fill="#fbf6fc"/><rect x="278.98" y="442.50" width="16.42" height="16.42" fill="#fbf6fc"/><rect x="295.35" y="442.50" width="16.42" height="16.42" fill="#fbf6fc"/><rect x="311.72" y="442.50" width="16.42" height="16.42" fill="#fbf6fc"/><rect x="328.09" y="442.50" width="16.42" height="16.42" fill="#fbf6fc"/><rect x="344.46" y="442.50" width="16.42" height="16.42" fill="#fcf9fd"/><rect x="360.83" y="442.50" width="16.42" height="16.42" fill="#fefcfe"/><rect x="377.20" y="442.50" width="16.42" height="16.42" fill="#fffeff"/><rect x="393.57" y="442.50" width="16.42" height="16.42" fill="#fcf9fd"/><rect x="409.94" y="442.50" width="16.42" height="16.42" fill="#fbf6fc"/><rect x="426.31" y="442.50" width="16.42" height="16.42" fill="#fbf6fc"/><rect x="442.68" y="442.50" width="16.42" height="16.42" fill="#fbf6fc"/><rect x="459.05" y="442.50" width="16.42" height="16.42" fill="#fefcfe"/><rect x="295.35" y="458.87" width="16.42" height="16.42" fill="#fffeff"/><rect x="311.72" y="458.87" width="16.42" height="16.42" fill="#fffeff"/><rect x="328.09" y="458.87" width="16.42" height="16.42" fill="#fffeff"/><rect x="344.46" y="458.87" width="16.42" height="16.42" fill="#fffeff"/><rect x="360.83" y="458.87" width="16.42" height="16.42" fill="#fefcfe"/><rect x="377.20" y="458.87" width="16.42" height="16.42" fill="#fefcfe"/><rect x="393.57" y="458.87" width="16.42" height="16.42" fill="#fffeff"/><rect x="409.94" y="458.87" width="16.42" height="16.42" fill="#fffeff"/></svg>
<div style="left:352px;top:655.6px;width:256px;height:5.6px;background:#ffffff;border-radius:3px;"></div>
<div style="left:1px;top:21px;width:50px;height:50.2px;background:#575757;border-radius:2px;"></div>
<div style="left:1px;top:73px;width:50px;height:50.2px;background:#575757;border-radius:2px;"></div>
<div style="left:1px;top:125px;width:50px;height:50.2px;background:#575757;border-radius:2px;"></div>
<div style="left:1px;top:177px;width:50px;height:50.2px;background:#575757;border-radius:2px;"></div>
<div style="left:1px;top:229px;width:50px;height:50.2px;background:#575757;border-radius:2px;"></div>
<div style="left:1px;top:281px;width:50px;height:50.2px;background:#575757;border-radius:2px;"></div>
<div style="left:1px;top:333px;width:50px;height:50.2px;background:#575757;border-radius:2px;"></div>
<div style="left:1px;top:385px;width:50px;height:50.2px;background:#575757;border-radius:2px;"></div>
<div style="left:1px;top:437px;width:50px;height:50.2px;background:#575757;border-radius:2px;"></div>
<div style="left:1px;top:489px;width:50px;height:50.2px;background:#575757;border-radius:2px;"></div>
<div style="left:1px;top:541px;width:50px;height:50.2px;background:#575757;border-radius:2px;"></div>
<div style="left:1px;top:593px;width:50px;height:50.2px;background:#575757;border-radius:2px;"></div>
<div class="t" style="left:1px;top:52.96px;width:50px;text-align:center;font-size:9.5px;letter-spacing:0.2px;color:#d2d2d2;">esc</div>
<div class="t" style="left:1px;top:104.96px;width:50px;text-align:center;font-size:9.5px;letter-spacing:0.2px;color:#d2d2d2;">control</div>
<div class="t" style="left:1px;top:156.96px;width:50px;text-align:center;font-size:9.5px;letter-spacing:0.2px;color:#d2d2d2;">shift</div>
<div class="t" style="left:1px;top:208.96px;width:50px;text-align:center;font-size:9.5px;letter-spacing:0.2px;color:#d2d2d2;">option</div>
<div class="t" style="left:1px;top:260.96px;width:50px;text-align:center;font-size:9.5px;letter-spacing:0.2px;color:#d2d2d2;">command</div>
<div class="t" style="left:1px;top:312.96px;width:50px;text-align:center;font-size:9.5px;letter-spacing:0.2px;color:#d2d2d2;">space</div>
<div style="left:16px;top:347.6px;width:20.2px;height:20.2px;background:#d6d6d6;border-radius:3px;"></div>
<div class="t" style="left:16px;top:353.85px;width:20.2px;text-align:center;font-size:8.8px;font-weight:bold;color:#383838;">T1</div>
<div style="left:16px;top:399.6px;width:20.2px;height:20.2px;background:#d6d6d6;border-radius:3px;"></div>
<div class="t" style="left:16px;top:405.85px;width:20.2px;text-align:center;font-size:8.8px;font-weight:bold;color:#383838;">T2</div>
<div style="left:16px;top:451.6px;width:20.2px;height:20.2px;background:#d6d6d6;border-radius:3px;"></div>
<div class="t" style="left:16px;top:457.85px;width:20.2px;text-align:center;font-size:8.8px;font-weight:bold;color:#383838;">T3</div>
<div style="left:16px;top:503.6px;width:20.2px;height:20.2px;background:#d6d6d6;border-radius:3px;"></div>
<div class="t" style="left:16px;top:509.85px;width:20.2px;text-align:center;font-size:8.8px;font-weight:bold;color:#383838;">T4</div>
<div style="left:16px;top:555.6px;width:20.2px;height:20.2px;background:#d6d6d6;border-radius:3px;"></div>
<div class="t" style="left:16px;top:561.85px;width:20.2px;text-align:center;font-size:8.8px;font-weight:bold;color:#383838;">T5</div>
<div style="left:16px;top:607.6px;width:20.2px;height:20.2px;background:#d6d6d6;border-radius:3px;"></div>
<div class="t" style="left:16px;top:613.85px;width:20.2px;text-align:center;font-size:8.8px;font-weight:bold;color:#383838;">T6</div>
<div style="left:10.9px;top:299.2px;width:30.4px;height:5.9px;background:#dadada;border-radius:1.6px;"></div>
<div class="t" style="left:13.5px;top:4.94px;font-size:10px;color:#f0f0f0;-webkit-text-stroke:0.35px #f0f0f0;letter-spacing:0.2px;transform:scaleY(0.92);transform-origin:0 84%;">5:34 PM</div>
<div class="t" style="left:61.5px;top:4.94px;font-size:10px;color:#f0f0f0;-webkit-text-stroke:0.35px #f0f0f0;letter-spacing:0.05px;transform:scaleY(0.92);transform-origin:0 84%;">Sun Dec 24</div>
<div style="left:471.5px;top:8.0px;width:3.8px;height:3.8px;background:#c2c2c2;border-radius:2px;"></div>
<div style="left:478.1px;top:8.0px;width:3.8px;height:3.8px;background:#c2c2c2;border-radius:2px;"></div>
<div style="left:484.7px;top:8.0px;width:3.8px;height:3.8px;background:#c2c2c2;border-radius:2px;"></div>
<div class="t" style="left:898.6px;top:4.94px;font-size:10px;color:#f0f0f0;-webkit-text-stroke:0.35px #f0f0f0;letter-spacing:-0.05px;transform:scaleY(0.92);transform-origin:0 84%;">100%</div>
<div class="t" style="left:98.8px;top:25.87px;font-size:10.2px;color:#dedede;">File</div>
<div class="t" style="left:129.8px;top:25.87px;font-size:10.2px;color:#dedede;">Edit</div>
<div class="t" style="left:163.0px;top:25.87px;font-size:10.2px;color:#dedede;">Animation</div>
<div class="t" style="left:225.0px;top:25.87px;font-size:10.2px;color:#dedede;">Layer</div>
<div class="t" style="left:265.8px;top:25.87px;font-size:10.2px;color:#dedede;">Select</div>
<div class="t" style="left:310.3px;top:25.87px;font-size:10.2px;color:#dedede;">View</div>
<div class="t" style="left:347.8px;top:25.87px;font-size:10.2px;color:#dedede;">Filter</div>
<div class="t" style="left:386.3px;top:25.87px;font-size:10.2px;color:#dedede;">Window</div>
<div class="t" style="left:438.3px;top:25.87px;font-size:10.2px;color:#dedede;">Help</div>
<div style="left:708.7px;top:55.5px;width:251.3px;height:17px;background:#373737;"></div>
<div style="left:708.7px;top:72.5px;width:216.3px;height:594.5px;background:#4a4a4a;"></div>
<div style="left:727.3px;top:62px;width:45.7px;height:11px;background:#4a4a4a;"></div>
<div class="t" style="left:750px;top:65.5px;font-size:8.5px;color:#dcdcdc;">Layer</div>
<div style="left:924.8px;top:55.5px;width:2.2px;height:611.5px;background:#555555;"></div>
<div style="left:927px;top:55.5px;width:33px;height:611.5px;background:#383838;"></div>
<div style="left:709.4px;top:77.3px;width:31.4px;height:19.4px;background:#5b5b5b;border-radius:2px;border:0.8px solid #6a6a6a;"></div>
<div style="left:743.3px;top:77.3px;width:72.8px;height:19.4px;background:#5b5b5b;border-radius:2px;border:0.8px solid #6a6a6a;"></div>
<div class="t" style="left:759.8px;top:82.89px;font-size:8.75px;color:#e0e0e0;">Normal</div>
<div class="t" style="left:898.3px;top:81.19px;font-size:8.4px;color:#e0e0e0;">100</div>
<svg style="left:821px;top:81.3px" width="70" height="7.5" viewBox="0 0 70 7.5" shape-rendering="crispEdges"><defs><pattern id="ck" width="7.4" height="7.4" patternUnits="userSpaceOnUse"><rect width="7.4" height="7.4" fill="#ffffff"/><rect x="3.7" width="3.7" height="3.7" fill="#c4c4c4"/><rect y="3.7" width="3.7" height="3.7" fill="#c4c4c4"/></pattern><linearGradient id="og" x1="0" x2="1"><stop offset="0" stop-color="#d0d0d0" stop-opacity="0"/><stop offset="1" stop-color="#cfcfcf" stop-opacity="1"/></linearGradient></defs><rect width="70" height="7.5" fill="url(#ck)"/><rect width="70" height="7.5" fill="url(#og)"/></svg>
<div style="left:890.5px;top:77px;width:3px;height:17px;background:#7a7a7a;border-radius:1px;"></div>
<div style="left:835px;top:97.3px;width:29px;height:20px;background:#505050;border-radius:2px;"></div>
<div style="left:865.5px;top:97.3px;width:29px;height:20px;background:#505050;border-radius:2px;"></div>
<div style="left:895px;top:97.3px;width:29.5px;height:20px;background:#5c5c5c;border-radius:2px;border:0.8px solid #707070;"></div>
<div style="left:708.7px;top:141.5px;width:210px;height:525.5px;background:#404040;"></div>
<div style="left:708.7px;top:141.5px;width:210px;height:54.5px;background:#3b3b3b;"></div>
<div style="left:708.7px;top:141.5px;width:210px;height:1px;background:#333333;"></div>
<div style="left:708.7px;top:168px;width:210px;height:1px;background:#2f2f2f;"></div>
<div style="left:708.7px;top:195.3px;width:210px;height:1px;background:#2f2f2f;"></div>
<div style="left:729.2px;top:142.5px;width:1px;height:53px;background:#2f2f2f;"></div>
<div style="left:747.7px;top:142.5px;width:1px;height:53px;background:#2f2f2f;"></div>
<div style="left:748.5px;top:142.5px;width:170px;height:25.5px;background:#656b90;"></div>
<div style="left:748.5px;top:142.5px;width:3.2px;height:25.5px;background:#7d84ac;"></div>
<div style="left:918.7px;top:141.5px;width:6.2px;height:525.5px;background:#444444;"></div>
<svg style="left:752.7px;top:144px" width="29" height="22" viewBox="0 0 29 22" shape-rendering="crispEdges"><defs><pattern id="ck2" width="6" height="6" patternUnits="userSpaceOnUse"><rect width="6" height="6" fill="#ffffff"/><rect x="3" width="3" height="3" fill="#d2d2d2"/><rect y="3" width="3" height="3" fill="#d2d2d2"/></pattern></defs><rect width="29" height="22" fill="#c9cde0"/><rect x="0.8" y="0.8" width="27.4" height="20.4" fill="#1c1c1c"/><rect x="1.8" y="1.8" width="25.4" height="18.4" fill="url(#ck2)"/></svg>
<div style="left:753.8px;top:172px;width:27px;height:20.3px;background:#ffffff;"></div>
<div class="t" style="left:787.8px;top:146.09px;font-size:8.4px;color:#e8e8e8;letter-spacing:0.05px;">100 %&nbsp; Normal</div>
<div class="t" style="left:787.8px;top:157.07px;font-size:8.3px;color:#e8e8e8;">Layer 1</div>
<div class="t" style="left:808px;top:183.67px;font-size:8.3px;color:#d8d8d8;">Paper</div>
<div style="left:928px;top:57.8px;width:29px;height:29.3px;background:#4c4c4c;"></div>
<div style="left:928px;top:91.9px;width:29px;height:29.3px;background:#4c4c4c;"></div>
<div style="left:928px;top:126.0px;width:29px;height:29.3px;background:#4c4c4c;"></div>
<div style="left:928px;top:160.10000000000002px;width:29px;height:29.3px;background:#4c4c4c;"></div>
<div style="left:926.6px;top:194px;width:30.4px;height:29.5px;background:#454545;"></div>
<div style="left:928px;top:195.3px;width:26.5px;height:26.5px;background:#505050;"></div>
<div style="left:711px;top:42px;width:1.6px;height:9.6px;background:#505050;"></div>
<div style="left:713.7px;top:42px;width:1.6px;height:9.6px;background:#505050;"></div>
<div class="t" style="left:138.2px;top:69.64px;font-size:9.05px;color:#dcdeea;">Illustration25 (6000 x 4000px 300dpi 22.7%)</div>
<svg style="left:0;top:0" width="960" height="667" viewBox="0 0 960 667"><rect x="214.0" y="40.6" width="1" height="22.8" rx="0" fill="#676767" stroke="none" stroke-width="1" /><rect x="307.4" y="40.6" width="1" height="22.8" rx="0" fill="#676767" stroke="none" stroke-width="1" /><rect x="361.4" y="40.6" width="1" height="22.8" rx="0" fill="#676767" stroke="none" stroke-width="1" /><rect x="462.0" y="40.6" width="1" height="22.8" rx="0" fill="#676767" stroke="none" stroke-width="1" /><rect x="539.1" y="40.6" width="1" height="22.8" rx="0" fill="#676767" stroke="none" stroke-width="1" /><rect x="616.6" y="40.6" width="1" height="22.8" rx="0" fill="#676767" stroke="none" stroke-width="1" /><rect x="646.6" y="40.6" width="1" height="22.8" rx="0" fill="#676767" stroke="none" stroke-width="1" /><rect x="566.25" y="40" width="23.5" height="23.6" rx="2" fill="#6a7098" stroke="none" stroke-width="1" /><rect x="129.3" y="47.199999999999996" width="11.5" height="1.4" rx="0.5" fill="#dcdcdc" stroke="none" stroke-width="1" /><rect x="129.3" y="51.4" width="11.5" height="1.4" rx="0.5" fill="#dcdcdc" stroke="none" stroke-width="1" /><rect x="129.3" y="55.599999999999994" width="11.5" height="1.4" rx="0.5" fill="#dcdcdc" stroke="none" stroke-width="1" /><path d="M158.3,48.5 H153 a1.6,1.6 0 0 0 -1.6,1.6 V57 a1.6,1.6 0 0 0 1.6,1.6 H162 a1.6,1.6 0 0 0 1.6,-1.6 V53.5" stroke="#b4b4b4" stroke-width="1.1" fill="none" stroke-linecap="round" stroke-linejoin="round" /><path d="M161.2,45 L166,45.4 L166.3,49.6 L161.3,52.6 L158.6,49.8 Z" stroke="none" stroke-width="1.1" fill="#cfcfcf" stroke-linecap="round" stroke-linejoin="round" /><path d="M159.6,51.2 L155.3,55.6 M155.3,55.6 c-1.6,-1.8 0.8,-3.6 1.8,-2.2" stroke="#c4c4c4" stroke-width="1.0" fill="none" stroke-linecap="round" stroke-linejoin="round" /><path d="M175.1,49.6 L178.9,46.20000000000001 L182.70000000000002,49.6" stroke="#d2d2d2" stroke-width="1.15" fill="none" stroke-linecap="round" stroke-linejoin="round" /><path d="M175.1,54.800000000000004 L178.9,58.199999999999996 L182.70000000000002,54.800000000000004" stroke="#d2d2d2" stroke-width="1.15" fill="none" stroke-linecap="round" stroke-linejoin="round" /><rect x="191.3" y="45" width="14.3" height="14.3" rx="1.8" fill="none" stroke="#bdbdbd" stroke-width="1.1" /><path d="M196.4,53.4 c1.5,-2.6 5.2,-2.6 4.6,-0.4 c-0.8,2.6 -6.8,3.4 -7.2,0.6 c-0.5,-3.6 6.8,-6.6 9.6,-3.4 c2.2,2.6 -1.2,6.0 -4.6,6.2" stroke="#c8c8c8" stroke-width="1.05" fill="none" stroke-linecap="round" stroke-linejoin="round" /><path d="M224.3,46.3 a1.3,1.3 0 0 1 1.3,-1.3 H232.8 a1.3,1.3 0 0 1 1.3,1.3 V53 M230,58.6 H228 L224.3,55 Z M224.3,55 V46.3" stroke="#c4c4c4" stroke-width="1.1" fill="none" stroke-linecap="round" stroke-linejoin="round" /><path d="M224.3,55 h3.7 v3.6 z" stroke="none" stroke-width="1.1" fill="#c4c4c4" stroke-linecap="round" stroke-linejoin="round" /><circle cx="234.2" cy="57.4" r="3.4" fill="#4c4c4c" stroke="#c8c8c8" stroke-width="1.1" /><path d="M232.2,57.4 h4 M234.2,55.4 v4" stroke="#c8c8c8" stroke-width="1.1" fill="none" stroke-linecap="round" stroke-linejoin="round" /><path d="M245.8,57.6 V47 a1,1 0 0 1 1,-1 H250.6 l1.6,2 H253" stroke="#bdbdbd" stroke-width="1.1" fill="none" stroke-linecap="round" stroke-linejoin="round" /><path d="M246.3,58.6 L249.2,51.4 H260.3 L257.6,58.6 Z" stroke="#cfcfcf" stroke-width="0.8" fill="#cfcfcf" stroke-linecap="round" stroke-linejoin="round" /><path d="M252.6,50.2 c0.4,-2.4 2.2,-3.3 5.4,-3.3" stroke="#cfcfcf" stroke-width="1.1" fill="none" stroke-linecap="round" stroke-linejoin="round" /><path d="M257.2,44.9 L260,46.9 L257.2,48.9 Z" stroke="#cfcfcf" stroke-width="0.6" fill="#cfcfcf" stroke-linecap="round" stroke-linejoin="round" /><path d="M273.6,47.8 H272.4 L269.2,54.4 V57.4 a1,1 0 0 0 1,1 H282.6 a1,1 0 0 0 1,-1 V54.4 L280.4,47.8 H279" stroke="#6c6c6c" stroke-width="1.1" fill="none" stroke-linecap="round" stroke-linejoin="round" /><path d="M269.4,54.6 H283.4 V58 H269.4 Z" stroke="none" stroke-width="1.1" fill="#6c6c6c" stroke-linecap="round" stroke-linejoin="round" /><path d="M276.3,45 V52 M274.3,50.2 L276.3,52.4 L278.3,50.2" stroke="#6c6c6c" stroke-width="1.1" fill="none" stroke-linecap="round" stroke-linejoin="round" /><path d="M292.2,49.6 L296,46.20000000000001 L299.8,49.6" stroke="#d2d2d2" stroke-width="1.15" fill="none" stroke-linecap="round" stroke-linejoin="round" /><path d="M292.2,54.800000000000004 L296,58.199999999999996 L299.8,54.800000000000004" stroke="#d2d2d2" stroke-width="1.15" fill="none" stroke-linecap="round" stroke-linejoin="round" /><path d="M320.6,49.1 H324.6 a4.1,4.1 0 0 1 0,8.2 H316.6" stroke="#d0d0d0" stroke-width="1.2" fill="none" stroke-linecap="round" stroke-linejoin="round" /><path d="M321,45.3 L316,49.1 L321,52.9 Z" stroke="#d0d0d0" stroke-width="0.4" fill="#d0d0d0" stroke-linecap="round" stroke-linejoin="round" /><path d="M346.4,49.1 H343.6 a4.1,4.1 0 0 0 0,8.2 H350.6" stroke="#6c6c6c" stroke-width="1.2" fill="none" stroke-linecap="round" stroke-linejoin="round" /><path d="M346.4,45.3 L351.4,49.1 L346.4,52.9 Z" stroke="#6c6c6c" stroke-width="0.4" fill="#6c6c6c" stroke-linecap="round" stroke-linejoin="round" /><line x1="380.31" y1="52.98" x2="382.96" y2="53.50" stroke="#d6d6d6" stroke-width="1.0" stroke-linecap="butt"/><line x1="379.64" y1="54.60" x2="381.89" y2="56.10" stroke="#d6d6d6" stroke-width="1.0" stroke-linecap="butt"/><line x1="378.40" y1="55.84" x2="379.90" y2="58.09" stroke="#d6d6d6" stroke-width="1.0" stroke-linecap="butt"/><line x1="376.78" y1="56.51" x2="377.30" y2="59.16" stroke="#d6d6d6" stroke-width="1.0" stroke-linecap="butt"/><line x1="375.02" y1="56.51" x2="374.50" y2="59.16" stroke="#d6d6d6" stroke-width="1.0" stroke-linecap="butt"/><line x1="373.40" y1="55.84" x2="371.90" y2="58.09" stroke="#d6d6d6" stroke-width="1.0" stroke-linecap="butt"/><line x1="372.16" y1="54.60" x2="369.91" y2="56.10" stroke="#d6d6d6" stroke-width="1.0" stroke-linecap="butt"/><line x1="371.49" y1="52.98" x2="368.84" y2="53.50" stroke="#d6d6d6" stroke-width="1.0" stroke-linecap="butt"/><line x1="371.49" y1="51.22" x2="368.84" y2="50.70" stroke="#d6d6d6" stroke-width="1.0" stroke-linecap="butt"/><line x1="372.16" y1="49.60" x2="369.91" y2="48.10" stroke="#d6d6d6" stroke-width="1.0" stroke-linecap="butt"/><line x1="373.40" y1="48.36" x2="371.90" y2="46.11" stroke="#d6d6d6" stroke-width="1.0" stroke-linecap="butt"/><line x1="375.02" y1="47.69" x2="374.50" y2="45.04" stroke="#d6d6d6" stroke-width="1.0" stroke-linecap="butt"/><line x1="376.78" y1="47.69" x2="377.30" y2="45.04" stroke="#d6d6d6" stroke-width="1.0" stroke-linecap="butt"/><line x1="378.40" y1="48.36" x2="379.90" y2="46.11" stroke="#d6d6d6" stroke-width="1.0" stroke-linecap="butt"/><line x1="379.64" y1="49.60" x2="381.89" y2="48.10" stroke="#d6d6d6" stroke-width="1.0" stroke-linecap="butt"/><line x1="380.31" y1="51.22" x2="382.96" y2="50.70" stroke="#d6d6d6" stroke-width="1.0" stroke-linecap="butt"/><rect x="393" y="45.6" width="10" height="10" rx="0" fill="none" stroke="#6c6c6c" stroke-width="1.1" stroke-dasharray="1.1 1.0"/><line x1="404.45" y1="51.44" x2="406.11" y2="50.75" stroke="#6c6c6c" stroke-width="1.0"/><line x1="404.80" y1="53.20" x2="406.60" y2="53.20" stroke="#6c6c6c" stroke-width="1.0"/><line x1="404.45" y1="54.96" x2="406.11" y2="55.65" stroke="#6c6c6c" stroke-width="1.0"/><line x1="403.45" y1="56.45" x2="404.73" y2="57.73" stroke="#6c6c6c" stroke-width="1.0"/><line x1="401.96" y1="57.45" x2="402.65" y2="59.11" stroke="#6c6c6c" stroke-width="1.0"/><line x1="400.20" y1="57.80" x2="400.20" y2="59.60" stroke="#6c6c6c" stroke-width="1.0"/><path d="M423.6,45.4 L430.8,52.4 L424.2,58.8 L417.2,52 Z" stroke="#d4d4d4" stroke-width="1.0" fill="#d4d4d4" stroke-linecap="round" stroke-linejoin="round" /><path d="M420.2,48.9 L423.6,45.6 L427,48.9 Z" stroke="none" stroke-width="1.1" fill="#4c4c4c" stroke-linecap="round" stroke-linejoin="round" /><path d="M419.8,49.4 L417,52 c-1,0.6 -1.4,2.4 -1.2,3.6 c0.6,0.9 1.6,0.3 1.6,-0.6 V51" stroke="#d4d4d4" stroke-width="1.0" fill="#d4d4d4" stroke-linecap="round" stroke-linejoin="round" /><rect x="441.2" y="48.4" width="10.8" height="10.2" rx="0" fill="none" stroke="#c4c4c4" stroke-width="1.0" /><circle cx="441.2" cy="48.4" r="0.95" fill="#d4d4d4" stroke="none" stroke-width="1" /><circle cx="452" cy="48.4" r="0.95" fill="#d4d4d4" stroke="none" stroke-width="1" /><circle cx="441.2" cy="58.6" r="0.95" fill="#d4d4d4" stroke="none" stroke-width="1" /><circle cx="452" cy="58.6" r="0.95" fill="#d4d4d4" stroke="none" stroke-width="1" /><circle cx="446.6" cy="48.4" r="0.95" fill="#d4d4d4" stroke="none" stroke-width="1" /><circle cx="446.6" cy="58.6" r="0.95" fill="#d4d4d4" stroke="none" stroke-width="1" /><circle cx="441.2" cy="53.5" r="0.95" fill="#d4d4d4" stroke="none" stroke-width="1" /><circle cx="452" cy="53.5" r="0.95" fill="#d4d4d4" stroke="none" stroke-width="1" /><path d="M446.6,48.4 V45.4" stroke="#c4c4c4" stroke-width="1.0" fill="none" stroke-linecap="round" stroke-linejoin="round" /><circle cx="446.6" cy="45.2" r="1.0" fill="#d4d4d4" stroke="none" stroke-width="1" /><rect x="470.3" y="45.8" width="12.8" height="12.6" rx="0" fill="none" stroke="#6c6c6c" stroke-width="1.1" stroke-dasharray="1.1 1.25"/><path d="M469.6,45.2 L483.6,59" stroke="#6c6c6c" stroke-width="1.1" fill="none" stroke-linecap="round" stroke-linejoin="round" /><rect x="494.2" y="45.8" width="12.4" height="12.6" rx="0" fill="none" stroke="#6c6c6c" stroke-width="1.1" stroke-dasharray="1.1 1.25"/><path d="M506.8,47.6 V58.6 H496 Z" stroke="none" stroke-width="1.1" fill="#6c6c6c" stroke-linecap="round" stroke-linejoin="round" /><path d="M494.4,58 L505.6,46.6" stroke="#6c6c6c" stroke-width="0.8" fill="none" stroke-linecap="round" stroke-linejoin="round" stroke-dasharray="1.2 1"/><rect x="517.6" y="45.5" width="13" height="13" rx="2.4" fill="none" stroke="#6c6c6c" stroke-width="1.2" /><rect x="520" y="47.9" width="8.2" height="8.2" rx="0" fill="none" stroke="#747474" stroke-width="1.0" stroke-dasharray="1 1"/><path d="M547.6,47 V58.2 H558.8 Z" stroke="#bdbdbd" stroke-width="1.1" fill="none" stroke-linecap="round" stroke-linejoin="round" /><path d="M561,44.6 L555.4,50.2 L553.8,51.6" stroke="#d8d8d8" stroke-width="1.7" fill="none" stroke-linecap="round" stroke-linejoin="round" /><path d="M570.2,52.6 H584.6 M570.4,52.8 c0.4,4 3.4,6.4 7,6.4 c3.6,0 6.4,-2.4 7,-6.4" stroke="#c9cce0" stroke-width="1.1" fill="none" stroke-linecap="round" stroke-linejoin="round" /><path d="M584.4,45.2 L579.2,50.4 L577.6,52" stroke="#dfe0ee" stroke-width="1.6" fill="none" stroke-linecap="round" stroke-linejoin="round" /><path d="M596.6,57.4 V52.4 H604 M596.6,57.4 H608.4" stroke="#c4c4c4" stroke-width="1.1" fill="none" stroke-linecap="round" stroke-linejoin="round" /><path d="M596.6,47.6 V52 M594.6,52.4 H596.4 M604,52.6 V59 M604.4,52.4 H608.6" stroke="#7d7d7d" stroke-width="0.8" fill="none" stroke-linecap="round" stroke-linejoin="round" /><path d="M608.4,45.2 L603.4,50.2 L602,51.6" stroke="#d8d8d8" stroke-width="1.6" fill="none" stroke-linecap="round" stroke-linejoin="round" /><rect x="626.5" y="44.3" width="9.8" height="15.2" rx="1.3" fill="none" stroke="#cfcfcf" stroke-width="1.1" /><rect x="626.6" y="57.2" width="9.6" height="2.3" rx="0" fill="#cfcfcf" stroke="none" stroke-width="1" /><rect x="628.3" y="46.4" width="1.4" height="1.4" rx="0" fill="#cfcfcf" stroke="none" stroke-width="1" /><rect x="630.5999999999999" y="46.4" width="1.4" height="1.4" rx="0" fill="#cfcfcf" stroke="none" stroke-width="1" /><rect x="632.9" y="46.4" width="1.4" height="1.4" rx="0" fill="#cfcfcf" stroke="none" stroke-width="1" /><rect x="628.3" y="48.699999999999996" width="1.4" height="1.4" rx="0" fill="#cfcfcf" stroke="none" stroke-width="1" /><rect x="630.5999999999999" y="48.699999999999996" width="1.4" height="1.4" rx="0" fill="#cfcfcf" stroke="none" stroke-width="1" /><rect x="632.9" y="48.699999999999996" width="1.4" height="1.4" rx="0" fill="#cfcfcf" stroke="none" stroke-width="1" /><rect x="628.3" y="51.0" width="1.4" height="1.4" rx="0" fill="#cfcfcf" stroke="none" stroke-width="1" /><rect x="630.5999999999999" y="51.0" width="1.4" height="1.4" rx="0" fill="#cfcfcf" stroke="none" stroke-width="1" /><rect x="628.3" y="53.3" width="1.4" height="1.4" rx="0" fill="#cfcfcf" stroke="none" stroke-width="1" /><path d="M657.36,56.86 A6.6,6.6 0 1 1 660.45,58.3 L656.2,60.2 Z" stroke="#c4c4c4" stroke-width="1.1" fill="none" stroke-linecap="round" stroke-linejoin="round" /><path d="M659.5,50 c0,-2.6 4.4,-2.6 4.4,-0.2 c0,1.6 -2.2,1.6 -2.2,3.4" stroke="#d4d4d4" stroke-width="1.2" fill="none" stroke-linecap="round" stroke-linejoin="round" /><circle cx="661.6" cy="55.4" r="0.8" fill="#d4d4d4" stroke="none" stroke-width="1" /><path d="M666.4,46.8 L668.6,44.6 M666.6,44.5 H668.7 V46.6" stroke="#c4c4c4" stroke-width="0.9" fill="none" stroke-linecap="round" stroke-linejoin="round" /><path d="M692.6,70.6 L697.3,75 L702,70.6" stroke="#e0e0e0" stroke-width="1.3" fill="none" stroke-linecap="round" stroke-linejoin="round" /><path d="M128.6,70 L134,75.6 M134,70 L128.6,75.6" stroke="#d6d8e6" stroke-width="0.9" fill="none" stroke-linecap="round" stroke-linejoin="round" /><path d="M57.5,44.1 L54.3,47.4 L57.5,50.699999999999996" stroke="#8a8a8a" stroke-width="1.0" fill="none" stroke-linecap="round" stroke-linejoin="round" /><path d="M61.3,44.1 L58.099999999999994,47.4 L61.3,50.699999999999996" stroke="#8a8a8a" stroke-width="1.0" fill="none" stroke-linecap="round" stroke-linejoin="round" /><path d="M92.5,44.1 L89.3,47.4 L92.5,50.699999999999996" stroke="#8a8a8a" stroke-width="1.0" fill="none" stroke-linecap="round" stroke-linejoin="round" /><path d="M96.3,44.1 L93.1,47.4 L96.3,50.699999999999996" stroke="#8a8a8a" stroke-width="1.0" fill="none" stroke-linecap="round" stroke-linejoin="round" /><path d="M115,44.1 L118.2,47.4 L115,50.7" stroke="#8a8a8a" stroke-width="1.0" fill="none" stroke-linecap="round" stroke-linejoin="round" /><rect x="79.4" y="42.6" width="1.6" height="9.6" rx="0" fill="#555555" stroke="none" stroke-width="1" /><rect x="82" y="42.6" width="1.6" height="9.6" rx="0" fill="#555555" stroke="none" stroke-width="1" /><rect x="52.7" y="56" width="34.3" height="16.6" rx="0" fill="#333333" stroke="none" stroke-width="1" /><rect x="72" y="61.6" width="14.4" height="11.2" rx="0" fill="#4d4d4d" stroke="none" stroke-width="1" /><rect x="52.7" y="72.6" width="33.8" height="4.6" rx="0" fill="#4d4d4d" stroke="none" stroke-width="1" /><rect x="59.2" y="62.4" width="6" height="1.0" rx="0" fill="#7a7a7a" stroke="none" stroke-width="1" /><rect x="59.2" y="65.0" width="6" height="1.0" rx="0" fill="#7a7a7a" stroke="none" stroke-width="1" /><rect x="59.2" y="67.6" width="6" height="1.0" rx="0" fill="#7a7a7a" stroke="none" stroke-width="1" /><path d="M86.4,61.8 L79.4,68.6 L77.9,72.4 L81.6,71 L86.4,66.2 Z" stroke="none" stroke-width="1.1" fill="#bdbdbd" stroke-linecap="round" stroke-linejoin="round" /><rect x="81.2" y="78.6" width="3.5" height="506" rx="1" fill="#4e4e4e" stroke="none" stroke-width="1" /><rect x="90" y="57.8" width="29.8" height="56.7" rx="0" fill="#4e4e4e" stroke="none" stroke-width="1" /><rect x="90" y="119.4" width="29.8" height="57.0" rx="0" fill="#4e4e4e" stroke="none" stroke-width="1" /><rect x="90" y="181" width="29.8" height="29.5" rx="0" fill="#4e4e4e" stroke="none" stroke-width="1" /><rect x="90" y="215.3" width="29.8" height="56.80000000000001" rx="0" fill="#4e4e4e" stroke="none" stroke-width="1" /><rect x="90" y="277.2" width="29.8" height="29.400000000000034" rx="0" fill="#4e4e4e" stroke="none" stroke-width="1" /><circle cx="65.9" cy="89.5" r="5.8" fill="none" stroke="#c4c4c4" stroke-width="1.15" /><path d="M70.2,93.9 L73.6,97.2" stroke="#c8c8c8" stroke-width="1.8" fill="none" stroke-linecap="round" stroke-linejoin="round" /><path d="M63.4,121.4 c-0.8,-2.2 -1.6,-3.4 -3,-5.2 c-0.6,-0.9 0.4,-1.8 1.3,-1.1 l2,1.7 l-1.1,-5.4 c-0.2,-1.1 1.2,-1.4 1.5,-0.4 l1.2,4 l0,-5.4 c0,-1.1 1.5,-1.1 1.6,0 l0.4,5.2 l1,-4.8 c0.2,-1 1.6,-0.8 1.5,0.3 l-0.5,5.4 l1.9,-3.3 c0.6,-0.9 1.8,-0.2 1.4,0.8 c-1.2,2.6 -1.9,4.4 -2.4,6.2 c-0.3,1.2 -0.8,1.8 -1.4,2.4 Z" stroke="#cfcfcf" stroke-width="0.5" fill="#cfcfcf" stroke-linecap="round" stroke-linejoin="round" /><path d="M64.9,131.9 L69.7,134.6 V140 L64.9,142.8 L60.1,140 V134.6 Z" stroke="#a8a8a8" stroke-width="1.0" fill="none" stroke-linecap="round" stroke-linejoin="round" /><path d="M60.3,134.7 L64.9,137.3 L69.6,134.7 M64.9,137.3 V142.6" stroke="#a8a8a8" stroke-width="0.9" fill="none" stroke-linecap="round" stroke-linejoin="round" /><path d="M67.6,138.8 L74.7,142.2 L71.8,143.3 L73.6,146.5 L71.8,147.3 L70.2,144.1 L68.1,146.2 Z" stroke="#3e3e3e" stroke-width="0.5" fill="#cfcfcf" stroke-linecap="round" stroke-linejoin="round" /><path d="M67.1,157.6 V170.2 M60.8,163.9 H73.4" stroke="#bdbdbd" stroke-width="1.3" fill="none" stroke-linecap="round" stroke-linejoin="round" /><path d="M64.6,159.6 L67.1,156.6 L69.6,159.6 Z" stroke="#cfcfcf" stroke-width="0.5" fill="#cfcfcf" stroke-linecap="round" stroke-linejoin="round" /><path d="M64.6,168.2 L67.1,171.2 L69.6,168.2 Z" stroke="#cfcfcf" stroke-width="0.5" fill="#cfcfcf" stroke-linecap="round" stroke-linejoin="round" /><path d="M62.8,161.4 L59.8,163.9 L62.8,166.4 Z" stroke="#cfcfcf" stroke-width="0.5" fill="#cfcfcf" stroke-linecap="round" stroke-linejoin="round" /><path d="M71.4,161.4 L74.4,163.9 L71.4,166.4 Z" stroke="#cfcfcf" stroke-width="0.5" fill="#cfcfcf" stroke-linecap="round" stroke-linejoin="round" /><rect x="55.6" y="176.8" width="22.7" height="22.4" rx="0" fill="#6b7199" stroke="#303038" stroke-width="0.9" /><path d="M64.6,191.6 c-4.4,-2 -4.6,-7 0.2,-9.6 c4.6,-2.4 9.8,-0.8 9.6,3.6 c-0.2,4.2 -4.6,7.4 -8,6.6 c-2,-0.4 -2.6,-2 -1.4,-2.6 c1.6,-0.8 2.8,1.6 1.2,3.4 c-1.4,1.6 -3.6,2.2 -5.8,2.2" stroke="#b6bad2" stroke-width="0.95" fill="none" stroke-linecap="round" stroke-linejoin="round" /><path d="M70.6,208.9 L65.4,214 L61.6,218.2 L60.2,219.8 L62.4,219 L66.8,215.4 L72,210.2" stroke="#bdbdbd" stroke-width="1.0" fill="none" stroke-linecap="round" stroke-linejoin="round" /><path d="M72.6,205.6 c1,-0.8 2.2,0.4 1.4,1.4 L72,209.4 L70.4,207.8 Z" stroke="#d0d0d0" stroke-width="1.0" fill="#d0d0d0" stroke-linecap="round" stroke-linejoin="round" /><path d="M68.8,208.2 L71.8,211.2" stroke="#d0d0d0" stroke-width="1.7" fill="none" stroke-linecap="round" stroke-linejoin="round" /><rect x="56" y="228.1" width="22.9" height="1.5" rx="0" fill="#565656" stroke="none" stroke-width="1" /><path d="M66.6,243.2 L60.2,249.8" stroke="#c4c4c4" stroke-width="1.3" fill="none" stroke-linecap="round" stroke-linejoin="round" /><line x1="68.7" y1="240.8" x2="74.40" y2="240.80" stroke="#c8c8c8" stroke-width="0.95"/><line x1="68.7" y1="240.8" x2="71.95" y2="244.05" stroke="#c8c8c8" stroke-width="0.95"/><line x1="68.7" y1="240.8" x2="68.70" y2="246.50" stroke="#c8c8c8" stroke-width="0.95"/><line x1="68.7" y1="240.8" x2="65.45" y2="244.05" stroke="#c8c8c8" stroke-width="0.95"/><line x1="68.7" y1="240.8" x2="63.00" y2="240.80" stroke="#c8c8c8" stroke-width="0.95"/><line x1="68.7" y1="240.8" x2="65.45" y2="237.55" stroke="#c8c8c8" stroke-width="0.95"/><line x1="68.7" y1="240.8" x2="68.70" y2="235.10" stroke="#c8c8c8" stroke-width="0.95"/><line x1="68.7" y1="240.8" x2="71.95" y2="237.55" stroke="#c8c8c8" stroke-width="0.95"/><circle cx="68.7" cy="240.8" r="2.3" fill="#cfcfcf" stroke="none" stroke-width="1" /><path d="M60.2,273.6 L66.6,262.6 L69.8,259.6 L75,264.6 L72,267.6 Z" stroke="#c4c4c4" stroke-width="1.0" fill="none" stroke-linecap="round" stroke-linejoin="round" /><path d="M66.8,262.4 L69.8,259.6 L75,264.6 L72.2,267.4 L70.6,266.4 c0.6,-1.4 -0.6,-1.8 -1.4,-1.2 l-0.6,1.4 l-0.2,-1.6 c-0.4,-0.9 -1.6,-0.6 -1.6,0.4 Z" stroke="none" stroke-width="1.1" fill="#cfcfcf" stroke-linecap="round" stroke-linejoin="round" /><path d="M60.2,273.6 L63.4,270.4 L61.6,271.2 Z" stroke="#cfcfcf" stroke-width="0.8" fill="#cfcfcf" stroke-linecap="round" stroke-linejoin="round" /><rect x="60.3" y="284.7" width="14.2" height="13.5" rx="2.6" fill="none" stroke="#b0b0b0" stroke-width="1.1" /><path d="M64.6,284.8 V298 M60.4,289.2 H74.4 M60.4,294 H74.4 M70,285 c1.2,3.2 1.2,9.6 -0.2,13" stroke="#a8a8a8" stroke-width="0.95" fill="none" stroke-linecap="round" stroke-linejoin="round" /><path d="M66.4,285.4 L73.6,290 M66.8,297.8 L73.6,293.2" stroke="#a0a0a0" stroke-width="0.95" fill="none" stroke-linecap="round" stroke-linejoin="round" /><rect x="63.9" y="317.4" width="10.6" height="5.5" rx="1.6" fill="none" stroke="#c8c8c8" stroke-width="1.2" /><path d="M64,318.6 c0,-3.4 2.4,-4.6 5.2,-4.6 c2.8,0 5.2,1.2 5.2,4.6 Z" stroke="#cfcfcf" stroke-width="0.6" fill="#cfcfcf" stroke-linecap="round" stroke-linejoin="round" /><rect x="68.1" y="310.4" width="2.1" height="3.8" rx="0.9" fill="#cfcfcf" stroke="none" stroke-width="1" /><circle cx="60.5" cy="308.4" r="0.55" fill="#b4b4b4" stroke="none" stroke-width="1" /><circle cx="60.5" cy="311" r="0.55" fill="#b4b4b4" stroke="none" stroke-width="1" /><circle cx="60.5" cy="313.6" r="0.55" fill="#b4b4b4" stroke="none" stroke-width="1" /><circle cx="60.5" cy="316.2" r="0.55" fill="#b4b4b4" stroke="none" stroke-width="1" /><circle cx="62.6" cy="309.6" r="0.55" fill="#b4b4b4" stroke="none" stroke-width="1" /><circle cx="62.6" cy="312.2" r="0.55" fill="#b4b4b4" stroke="none" stroke-width="1" /><circle cx="62.6" cy="314.8" r="0.55" fill="#b4b4b4" stroke="none" stroke-width="1" /><circle cx="64.6" cy="311" r="0.55" fill="#b4b4b4" stroke="none" stroke-width="1" /><circle cx="64.6" cy="313.2" r="0.55" fill="#b4b4b4" stroke="none" stroke-width="1" /><circle cx="66.4" cy="312.1" r="0.55" fill="#b4b4b4" stroke="none" stroke-width="1" /><path d="M60.2,347.20000000000005 L66.6,336.20000000000005 L69.8,333.20000000000005 L75,338.20000000000005 L72,341.20000000000005 Z" stroke="#c4c4c4" stroke-width="1.0" fill="none" stroke-linecap="round" stroke-linejoin="round" /><path d="M66.8,336.0 L69.8,333.20000000000005 L75,338.20000000000005 L72.2,341.0 L70.6,340.0 c0.6,-1.4 -0.6,-1.8 -1.4,-1.2 l-0.6,1.4 l-0.2,-1.6 c-0.4,-0.9 -1.6,-0.6 -1.6,0.4 Z" stroke="none" stroke-width="1.1" fill="#cfcfcf" stroke-linecap="round" stroke-linejoin="round" /><path d="M60.2,347.20000000000005 L63.4,344.0 L61.6,344.79999999999995 Z" stroke="#cfcfcf" stroke-width="0.8" fill="#cfcfcf" stroke-linecap="round" stroke-linejoin="round" /><path d="M60.3,371.6 c0.2,-3 1.4,-6 3.6,-8.4 c1.8,-1.9 3.8,-2.6 5.4,-2.2 l1.4,1.4 c0.5,1.7 -0.3,3.7 -2.2,5.4 c-2.4,2.2 -5.4,3.5 -8.2,3.8 Z" stroke="#c4c4c4" stroke-width="1.05" fill="none" stroke-linecap="round" stroke-linejoin="round" /><path d="M60.3,371.6 c0.2,-1.8 0.6,-3.2 1.4,-4.8 l1,1.2 l1.2,-0.7 l0.5,1.5 l1.5,-0.3 l-0.1,1.5 c-1.7,0.9 -3.5,1.4 -5.5,1.6 Z" stroke="none" stroke-width="1.1" fill="#cfcfcf" stroke-linecap="round" stroke-linejoin="round" /><path d="M71.5,357.9 L74.6,361 L72,363.5 L69,360.4 Z" stroke="#cfcfcf" stroke-width="0.5" fill="#cfcfcf" stroke-linecap="round" stroke-linejoin="round" /><path d="M60.2,395.6 c0.4,-4 2,-7.6 5,-10.4 L69.2,388.8 c-2.4,3.2 -5.4,5.4 -9,6.8 Z" stroke="#bdbdbd" stroke-width="1.0" fill="none" stroke-linecap="round" stroke-linejoin="round" /><path d="M65.2,385.2 L69,381.6 L74.8,386.6 L71,390.4" stroke="#bdbdbd" stroke-width="1.0" fill="none" stroke-linecap="round" stroke-linejoin="round" /><path d="M68.8,381.8 L74.6,386.8 L72.4,389 L66.6,383.8 Z" stroke="none" stroke-width="1.1" fill="#cfcfcf" stroke-linecap="round" stroke-linejoin="round" /><path d="M60.4,395.4 L66.4,389.2" stroke="#cfcfcf" stroke-width="1.3" fill="none" stroke-linecap="round" stroke-linejoin="round" /><path d="M60.2,395.6 L62.6,391.8 L64,393.6 Z" stroke="none" stroke-width="1.1" fill="#cfcfcf" stroke-linecap="round" stroke-linejoin="round" /><path d="M68.2,406.6 L74.3,412.8 L66.6,420.2 L61,419.8 L60.2,415.2 Z" stroke="#c4c4c4" stroke-width="1.0" fill="none" stroke-linecap="round" stroke-linejoin="round" /><path d="M68.2,406.6 L74.3,412.8 L68.6,418.4 L62.4,412.4 Z" stroke="none" stroke-width="1.1" fill="#cfcfcf" stroke-linecap="round" stroke-linejoin="round" /><path d="M65.4,420.3 H73.2" stroke="#c4c4c4" stroke-width="1.0" fill="none" stroke-linecap="round" stroke-linejoin="round" /><defs><linearGradient id="dg" x1="0" x2="1"><stop offset="0" stop-color="#b4b4b4"/><stop offset="0.5" stop-color="#5c5c5c"/><stop offset="1" stop-color="#b0b0b0"/></linearGradient><linearGradient id="gg" x1="0" y1="1" x2="1" y2="0"><stop offset="0" stop-color="#c6c6c6"/><stop offset="1" stop-color="#4a4a4a"/></linearGradient></defs><path d="M63.699999999999996,431.8 c1.4,2.4 2.6,3.8 3.6,5 c1,-1.2 2.2,-2.6 3.6,-5 c2,3.6 4,5.8 4,8.6 c0,2.6 -2,4.6 -4.2,4.6 c-1.4,0 -2.6,-0.6 -3.4,-1.6 c-0.8,1 -2,1.6 -3.4,1.6 c-2.2,0 -4.2,-2 -4.2,-4.6 c0,-2.8 2,-5 4,-8.6 Z" stroke="#b4b4b4" stroke-width="1.0" fill="url(#dg)" stroke-linecap="round" stroke-linejoin="round" /><rect x="56" y="455.9" width="22.9" height="1.5" rx="0" fill="#565656" stroke="none" stroke-width="1" /><path d="M67.5,463.4 L74.9,470.59999999999997 L68.1,477.4 L60.9,470.2 Z" stroke="#d0d0d0" stroke-width="1.0" fill="#d0d0d0" stroke-linecap="round" stroke-linejoin="round" /><path d="M64.0,467.09999999999997 L67.5,463.59999999999997 L71.0,467.09999999999997 Z" stroke="none" stroke-width="1.1" fill="#3e3e3e" stroke-linecap="round" stroke-linejoin="round" /><path d="M63.7,467.59999999999997 L60.7,470.4 c-1,0.8 -1.2,2.6 -1,3.8 c0.6,1 1.8,0.4 1.8,-0.6 V469.4" stroke="#d0d0d0" stroke-width="1.0" fill="#d0d0d0" stroke-linecap="round" stroke-linejoin="round" /><rect x="60.7" y="488.3" width="13" height="13" rx="1.8" fill="url(#gg)" stroke="#a8a8a8" stroke-width="1.0" /><rect x="60.8" y="513" width="12.9" height="12.6" rx="1.4" fill="none" stroke="#8c8c8c" stroke-width="1.2" /><rect x="61.3" y="537.6" width="11.8" height="12.2" rx="1.6" fill="none" stroke="#8e8e8e" stroke-width="1.2" /><path d="M60,544.9 L74.2,540.1 M60,547.4 L74.2,542.4" stroke="#9c9c9c" stroke-width="1.0" fill="none" stroke-linecap="round" stroke-linejoin="round" /><rect x="61.9" y="538.2" width="10.6" height="11" rx="0" fill="none" stroke="none" stroke-width="1" /><path d="M61.4,562.9 H72.6 L61.4,573.6 Z" stroke="#c4c4c4" stroke-width="1.9" fill="none" stroke-linecap="round" stroke-linejoin="round" stroke-linejoin="miter"/><path d="M61.5,599.5 L67.2,585.9 L72.9,599.5 M63.6,594.8 H70.8" stroke="#c4c4c4" stroke-width="1.8" fill="none" stroke-linecap="round" stroke-linejoin="round" stroke-linejoin="miter"/><ellipse cx="67.2" cy="615.8" rx="7.2" ry="5.3" fill="none" stroke="#a4a4a4" stroke-width="1.1"/><rect x="52.7" y="622" width="33.5" height="45" rx="0" fill="#484848" stroke="none" stroke-width="1" /><rect x="53.5" y="623" width="19.4" height="19.4" rx="2.4" fill="#3a3a3a" stroke="#5a5a5a" stroke-width="0.8" /><rect x="65.4" y="633.2" width="20.4" height="20.2" rx="2.6" fill="#7b8dcf" stroke="none" stroke-width="1" /><rect x="67.6" y="635.4" width="16.2" height="15.8" rx="1.2" fill="#dc8be9" stroke="none" stroke-width="1" /><rect x="53.5" y="623" width="19.4" height="19.4" rx="2.4" fill="#3a3a3a" stroke="#5a5a5a" stroke-width="0.8" /><rect x="55.7" y="625.1" width="15.8" height="15.6" rx="1" fill="#ffffff" stroke="none" stroke-width="1" /><rect x="54" y="655.8" width="31.8" height="9.4" rx="2" fill="none" stroke="#5c5c5c" stroke-width="1.0" /><rect x="56.2" y="658" width="27" height="5.2" rx="0.6" fill="#ffffff" stroke="none" stroke-width="1" /><rect x="56.2" y="658" width="3.4" height="2.6" rx="0" fill="#4a4a4a" stroke="none" stroke-width="1" /><rect x="59.6" y="660.6" width="3.4" height="2.6" rx="0" fill="#4a4a4a" stroke="none" stroke-width="1" /><rect x="63.0" y="658" width="3.4" height="2.6" rx="0" fill="#4a4a4a" stroke="none" stroke-width="1" /><rect x="66.4" y="660.6" width="3.4" height="2.6" rx="0" fill="#4a4a4a" stroke="none" stroke-width="1" /><rect x="69.8" y="658" width="3.4" height="2.6" rx="0" fill="#4a4a4a" stroke="none" stroke-width="1" /><rect x="73.2" y="660.6" width="3.4" height="2.6" rx="0" fill="#4a4a4a" stroke="none" stroke-width="1" /><rect x="76.6" y="658" width="3.4" height="2.6" rx="0" fill="#4a4a4a" stroke="none" stroke-width="1" /><rect x="80.0" y="660.6" width="3.200000000000003" height="2.6" rx="0" fill="#4a4a4a" stroke="none" stroke-width="1" /><path d="M111.6,65.4 L100.2,76.9" stroke="#c4c4c4" stroke-width="3.0" fill="none" stroke-linecap="round" stroke-linejoin="round" stroke-linecap="butt"/><path d="M99.6,75.6 L101.6,77.8 L98.2,79 Z" stroke="#c4c4c4" stroke-width="0.5" fill="#c4c4c4" stroke-linecap="round" stroke-linejoin="round" /><circle cx="109.3" cy="76.6" r="4.0" fill="#4e4e4e" stroke="#bdbdbd" stroke-width="0.9" /><circle cx="109.3" cy="76.6" r="2.3" fill="none" stroke="#bdbdbd" stroke-width="0.85" /><circle cx="109.3" cy="76.6" r="0.8" fill="none" stroke="#bdbdbd" stroke-width="0.7" /><path d="M103.6,103.2 c-5,-0.6 -6.4,-5.6 -3.4,-8.8 c3.2,-3.4 9,-3.2 11,0 c0.9,1.5 1,3 0.6,4.6" stroke="#bdbdbd" stroke-width="1.0" fill="none" stroke-linecap="round" stroke-linejoin="round" /><path d="M98,107 c2.6,0 5.2,-0.4 5.8,-2 c0.6,-1.6 -0.6,-2.8 -1.8,-2.4 c-1.2,0.4 -0.8,1.8 0.6,2.2" stroke="#bdbdbd" stroke-width="1.0" fill="none" stroke-linecap="round" stroke-linejoin="round" /><polygon points="114.00,104.70 112.38,105.81 112.74,107.74 110.81,107.38 109.70,109.00 108.59,107.38 106.66,107.74 107.02,105.81 105.40,104.70 107.02,103.59 106.66,101.66 108.59,102.02 109.70,100.40 110.81,102.02 112.74,101.66 112.38,103.59" fill="#d0d0d0"/><circle cx="109.7" cy="104.7" r="1.5" fill="#4e4e4e" stroke="none" stroke-width="1" /><path d="M104.2,138 c-5.6,-0.8 -6.6,-6 -3.4,-9.2 c3.4,-3.2 9.2,-2.8 11,0.6 c0.7,1.4 0.8,2.6 0.6,3.8" stroke="#bdbdbd" stroke-width="1.0" fill="none" stroke-linecap="round" stroke-linejoin="round" /><path d="M98,141.6 c2.8,0 5.4,-0.6 6,-2.2 c0.6,-1.6 -0.6,-2.8 -1.8,-2.4 c-1.2,0.4 -0.8,1.8 0.6,2.2" stroke="#bdbdbd" stroke-width="1.0" fill="none" stroke-linecap="round" stroke-linejoin="round" /><path d="M106.8,135.4 V142.2 M106.8,135.7 H112.6 M106.8,138.8 H112.6 M106.8,141.9 H112.6" stroke="#c4c4c4" stroke-width="0.95" fill="none" stroke-linecap="round" stroke-linejoin="round" /><circle cx="113" cy="135.7" r="1.0" fill="#d0d0d0" stroke="none" stroke-width="1" /><circle cx="113" cy="138.8" r="1.0" fill="#d0d0d0" stroke="none" stroke-width="1" /><circle cx="113" cy="141.9" r="1.0" fill="#d0d0d0" stroke="none" stroke-width="1" /><circle cx="104.9" cy="161.6" r="7.3" fill="none" stroke="#b4b4b4" stroke-width="1.0" /><rect x="101.2" y="158" width="7.4" height="7.3" rx="1" fill="url(#gg)" stroke="#a8a8a8" stroke-width="0.8" /><path d="M101.8,189.6 c1.3,2.4 2.5,3.8 3.4,5 c0.9,-1.2 2.1,-2.6 3.4,-5 c2,3.6 4.2,6 4.2,8.8 c0,2.6 -2,4.6 -4.3,4.6 c-1.3,0 -2.5,-0.6 -3.3,-1.6 c-0.8,1 -2,1.6 -3.3,1.6 c-2.3,0 -4.3,-2 -4.3,-4.6 c0,-2.8 2.2,-5.2 4.2,-8.8 Z" stroke="#b4b4b4" stroke-width="1.0" fill="url(#dg)" stroke-linecap="round" stroke-linejoin="round" /><rect x="98.2" y="223.7" width="13.5" height="13" rx="2.2" fill="#bdbdbd" stroke="none" stroke-width="1" /><rect x="99.6" y="225.0" width="3.2" height="3.1" rx="0.4" fill="#5a5a5a" stroke="none" stroke-width="1" /><rect x="103.35" y="225.0" width="3.2" height="3.1" rx="0.4" fill="#c8c8c8" stroke="none" stroke-width="1" /><rect x="107.1" y="225.0" width="3.2" height="3.1" rx="0.4" fill="#9a9a9a" stroke="none" stroke-width="1" /><rect x="99.6" y="228.6" width="3.2" height="3.1" rx="0.4" fill="#808080" stroke="none" stroke-width="1" /><rect x="103.35" y="228.6" width="3.2" height="3.1" rx="0.4" fill="#6a6a6a" stroke="none" stroke-width="1" /><rect x="107.1" y="228.6" width="3.2" height="3.1" rx="0.4" fill="#707070" stroke="none" stroke-width="1" /><rect x="99.6" y="232.2" width="3.2" height="3.1" rx="0.4" fill="#c8c8c8" stroke="none" stroke-width="1" /><rect x="103.35" y="232.2" width="3.2" height="3.1" rx="0.4" fill="#8c8c8c" stroke="none" stroke-width="1" /><rect x="107.1" y="232.2" width="3.2" height="3.1" rx="0.4" fill="#4c4c4c" stroke="none" stroke-width="1" /><circle cx="105" cy="230.2" r="1.3" fill="#505050" stroke="#c8c8c8" stroke-width="0.6" /><rect x="98.3" y="251" width="13.1" height="13.4" rx="1.6" fill="#b8b8b8" stroke="none" stroke-width="1" /><rect x="101.6" y="252.4" width="6.6" height="3.2" rx="0" fill="#808080" stroke="none" stroke-width="1" /><rect x="101.6" y="256.4" width="6.6" height="3.4" rx="0" fill="#c8c8c8" stroke="none" stroke-width="1" /><rect x="101.6" y="260.4" width="6.6" height="3.0" rx="0" fill="#808080" stroke="none" stroke-width="1" /><rect x="99.2" y="252.2" width="1.5" height="1.0" rx="0" fill="#555555" stroke="none" stroke-width="1" /><rect x="109.2" y="252.2" width="1.5" height="1.0" rx="0" fill="#555555" stroke="none" stroke-width="1" /><rect x="99.2" y="254.79999999999998" width="1.5" height="1.0" rx="0" fill="#555555" stroke="none" stroke-width="1" /><rect x="109.2" y="254.79999999999998" width="1.5" height="1.0" rx="0" fill="#555555" stroke="none" stroke-width="1" /><rect x="99.2" y="257.40000000000003" width="1.5" height="1.0" rx="0" fill="#555555" stroke="none" stroke-width="1" /><rect x="109.2" y="257.40000000000003" width="1.5" height="1.0" rx="0" fill="#555555" stroke="none" stroke-width="1" /><rect x="99.2" y="260.0" width="1.5" height="1.0" rx="0" fill="#555555" stroke="none" stroke-width="1" /><rect x="109.2" y="260.0" width="1.5" height="1.0" rx="0" fill="#555555" stroke="none" stroke-width="1" /><rect x="99.2" y="262.6" width="1.5" height="1.0" rx="0" fill="#555555" stroke="none" stroke-width="1" /><rect x="109.2" y="262.6" width="1.5" height="1.0" rx="0" fill="#555555" stroke="none" stroke-width="1" /><rect x="98.4" y="285.5" width="13.2" height="13.1" rx="2.2" fill="none" stroke="#a8a8a8" stroke-width="1.0" /><rect x="100.3" y="287.3" width="9.4" height="9.0" rx="0" fill="#555555" stroke="#9c9c9c" stroke-width="0.7" /><path d="M100.5,296.2 V293.4 c1,-1.6 2,-1.6 2.8,-0.4 c1.2,-2.6 2.8,-2.8 3.8,-1 c0.8,-0.8 1.6,-0.6 2.4,0.6 V296.2 Z" stroke="none" stroke-width="1.1" fill="#8c8c8c" stroke-linecap="round" stroke-linejoin="round" /><path d="M21.4,37.2 A6.3,6.3 0 1 0 25.8,35.5" stroke="#e4e4e4" stroke-width="1.1" fill="none" stroke-linecap="round" stroke-linejoin="round" /><path d="M26.4,41.6 L20.6,36.2" stroke="#e4e4e4" stroke-width="1.1" fill="none" stroke-linecap="round" stroke-linejoin="round" /><path d="M19.4,35 L23.6,35.6 L20.2,39 Z" stroke="#e4e4e4" stroke-width="0.5" fill="#e4e4e4" stroke-linecap="round" stroke-linejoin="round" /><path d="M21.2,93.3 L26.1,88.5 L31,93.3" stroke="#e4e4e4" stroke-width="1.3" fill="none" stroke-linecap="round" stroke-linejoin="round" /><path d="M26,139.7 L32.2,145.6 H29.2 V152.5 H22.9 V145.6 H19.9 Z" stroke="#e4e4e4" stroke-width="1.1" fill="none" stroke-linecap="round" stroke-linejoin="round" /><path d="M18.9,192.9 H23.4 L28.8,203.8 H33.3 M28.8,192.9 H33.3" stroke="#e4e4e4" stroke-width="1.2" fill="none" stroke-linecap="round" stroke-linejoin="round" /><path d="M23.4,247.7 H28.6 V252.9 H23.4 Z" stroke="#e4e4e4" stroke-width="1.05" fill="none" stroke-linecap="round" stroke-linejoin="round" /><circle cx="21.5" cy="245.8" r="1.95" fill="none" stroke="#e4e4e4" stroke-width="1.05" /><circle cx="30.5" cy="245.8" r="1.95" fill="none" stroke="#e4e4e4" stroke-width="1.05" /><circle cx="21.5" cy="254.8" r="1.95" fill="none" stroke="#e4e4e4" stroke-width="1.05" /><circle cx="30.5" cy="254.8" r="1.95" fill="none" stroke="#e4e4e4" stroke-width="1.05" /><path d="M929.2,44.1 L932.6,47.4 L929.2,50.7" stroke="#8a8a8a" stroke-width="1.0" fill="none" stroke-linecap="round" stroke-linejoin="round" /><path d="M950.6,44.1 L953.8000000000001,47.4 L950.6,50.699999999999996" stroke="#8a8a8a" stroke-width="1.0" fill="none" stroke-linecap="round" stroke-linejoin="round" /><path d="M954.4,44.1 L957.6,47.4 L954.4,50.699999999999996" stroke="#8a8a8a" stroke-width="1.0" fill="none" stroke-linecap="round" stroke-linejoin="round" /><rect x="714.9" y="62.9" width="6" height="1.0" rx="0" fill="#6e6e6e" stroke="none" stroke-width="1" /><rect x="714.9" y="65.4" width="6" height="1.0" rx="0" fill="#6e6e6e" stroke="none" stroke-width="1" /><rect x="714.9" y="67.9" width="6" height="1.0" rx="0" fill="#6e6e6e" stroke="none" stroke-width="1" /><path d="M738.8,64.3 L743.9,67.3 L738.8,70.3 L733.6999999999999,67.3 Z" stroke="#c8c8c8" stroke-width="0.95" fill="none" stroke-linecap="round" stroke-linejoin="round" /><path d="M733.6999999999999,70.2 L738.8,73.2 L743.9,70.2" stroke="#c8c8c8" stroke-width="0.95" fill="none" stroke-linecap="round" stroke-linejoin="round" /><path d="M733.6999999999999,73.1 L738.8,76.1 L743.9,73.1" stroke="#c8c8c8" stroke-width="0.95" fill="none" stroke-linecap="round" stroke-linejoin="round" /><rect x="713.4" y="81.9" width="11.4" height="10.2" rx="2" fill="none" stroke="#a8a8a8" stroke-width="1.1" /><path d="M731.0,85.2 L734.3,82.0 L737.5999999999999,85.2" stroke="#bcbcbc" stroke-width="1.2" fill="none" stroke-linecap="round" stroke-linejoin="round" /><path d="M731.0,88.99999999999999 L734.3,92.19999999999999 L737.5999999999999,88.99999999999999" stroke="#bcbcbc" stroke-width="1.2" fill="none" stroke-linecap="round" stroke-linejoin="round" /><path d="M805.7,85.2 L809,82.0 L812.3,85.2" stroke="#bcbcbc" stroke-width="1.2" fill="none" stroke-linecap="round" stroke-linejoin="round" /><path d="M805.7,88.99999999999999 L809,92.19999999999999 L812.3,88.99999999999999" stroke="#bcbcbc" stroke-width="1.2" fill="none" stroke-linecap="round" stroke-linejoin="round" /><path d="M914.5,83.7 L917.8,80.5 L921.0999999999999,83.7" stroke="#bcbcbc" stroke-width="1.2" fill="none" stroke-linecap="round" stroke-linejoin="round" /><path d="M914.5,87.49999999999999 L917.8,90.69999999999999 L921.0999999999999,87.49999999999999" stroke="#bcbcbc" stroke-width="1.2" fill="none" stroke-linecap="round" stroke-linejoin="round" /><rect x="726.8" y="105.6" width="7.2" height="7.2" rx="1" fill="none" stroke="#8c8c8c" stroke-width="0.9" /><rect x="728.4" y="104" width="7.2" height="7.2" rx="1" fill="#4a4a4a" stroke="#8c8c8c" stroke-width="0.9" /><rect x="729.4" y="101.6" width="8.2" height="8.6" rx="0.8" fill="none" stroke="#b4b4b4" stroke-width="0.9" stroke-dasharray="1.3 0.9"/><rect x="729.6" y="105" width="5.4" height="5.4" rx="0" fill="#b8b8b8" stroke="none" stroke-width="1" /><path d="M753.7,107.3 H756.3 L757.3,112.8 H752.7 Z" stroke="#c4c4c4" stroke-width="0.4" fill="#c4c4c4" stroke-linecap="round" stroke-linejoin="round" /><rect x="753.4" y="103.5" width="3.2" height="2.7" rx="0" fill="none" stroke="#c4c4c4" stroke-width="0.9" /><path d="M753.2,103.2 L755,101.9 L756.8,103.2" stroke="#c4c4c4" stroke-width="0.9" fill="none" stroke-linecap="round" stroke-linejoin="round" /><path d="M751.7,106.9 H758.3" stroke="#c4c4c4" stroke-width="0.9" fill="none" stroke-linecap="round" stroke-linejoin="round" /><path d="M752.5,104.1 L749.3,102.6 M752.5,105.5 L749.3,107.4 M757.5,104.1 L760.7,102.6 M757.5,105.5 L760.7,107.4" stroke="#c4c4c4" stroke-width="0.9" fill="none" stroke-linecap="round" stroke-linejoin="round" /><path d="M773,102 H778 V106.6 L776.6,111.8 H774.4 L773,106.6 Z" stroke="#c4c4c4" stroke-width="0.9" fill="none" stroke-linecap="round" stroke-linejoin="round" /><path d="M773.2,102.2 H777.8 V106 L775.5,104.4 L773.2,106 Z" stroke="none" stroke-width="1.1" fill="#c4c4c4" stroke-linecap="round" stroke-linejoin="round" /><path d="M776,111.8 H779.6 M778.2,108.8 c2,-1.2 3.8,-0.8 5.2,1 M778,108.4 l0.2,2 l1.6,-1 Z" stroke="#c4c4c4" stroke-width="0.9" fill="none" stroke-linecap="round" stroke-linejoin="round" /><rect x="796.6" y="105.8" width="8.3" height="6.4" rx="0.9" fill="#c4c4c4" stroke="none" stroke-width="1" /><path d="M798.2,105.8 V104.0 a2.5500000000000003,2.5500000000000003 0 0 1 5.1000000000000005,0 V105.8" stroke="#c4c4c4" stroke-width="1.15" fill="none" stroke-linecap="round" stroke-linejoin="round" /><rect x="819.6" y="101.9" width="3.2" height="3.2" rx="0" fill="#b0b0b0" stroke="none" stroke-width="1" /><rect x="826.0" y="101.9" width="3.2" height="3.2" rx="0" fill="#b0b0b0" stroke="none" stroke-width="1" /><rect x="822.8000000000001" y="105.10000000000001" width="3.2" height="3.2" rx="0" fill="#b0b0b0" stroke="none" stroke-width="1" /><rect x="819.6" y="108.30000000000001" width="3.2" height="3.2" rx="0" fill="#b0b0b0" stroke="none" stroke-width="1" /><rect x="826.0" y="108.30000000000001" width="3.2" height="3.2" rx="0" fill="#b0b0b0" stroke="none" stroke-width="1" /><rect x="816.8" y="106.8" width="7.4" height="6.8" rx="0" fill="#4a4a4a" stroke="none" stroke-width="1" /><rect x="818.6" y="104.6" width="3.8" height="3" rx="0" fill="#4a4a4a" stroke="none" stroke-width="1" /><rect x="817.7" y="108" width="5.7" height="4.8" rx="0.9" fill="#cfcfcf" stroke="none" stroke-width="1" /><path d="M819.3000000000001,108 V106.2 a1.25,1.25 0 0 1 2.5,0 V108" stroke="#cfcfcf" stroke-width="1.15" fill="none" stroke-linecap="round" stroke-linejoin="round" /><rect x="839.2" y="102.2" width="10.6" height="10.5" rx="1.6" fill="#707070" stroke="none" stroke-width="1" /><circle cx="844.2" cy="107.2" r="3" fill="#4f4f4f" stroke="none" stroke-width="1" /><path d="M846.4,109.4 L850.6,113.6 M850.6,109.4 L846.4,113.6" stroke="#4f4f4f" stroke-width="2.2" fill="none" stroke-linecap="round" stroke-linejoin="round" /><path d="M846.6,109.6 L850.4,113.4 M850.4,109.6 L846.6,113.4" stroke="#707070" stroke-width="0.9" fill="none" stroke-linecap="round" stroke-linejoin="round" /><path d="M853.7,105.30000000000001 L857,102.10000000000001 L860.3,105.30000000000001" stroke="#707070" stroke-width="1.2" fill="none" stroke-linecap="round" stroke-linejoin="round" /><path d="M853.7,109.1 L857,112.3 L860.3,109.1" stroke="#707070" stroke-width="1.2" fill="none" stroke-linecap="round" stroke-linejoin="round" /><path d="M869.4,102.6 H879.4 L869.4,112.4 Z" stroke="#707070" stroke-width="0.8" fill="#707070" stroke-linecap="round" stroke-linejoin="round" /><path d="M871.6,104.8 H874.8 L871.6,108 Z" stroke="none" stroke-width="1.1" fill="#4f4f4f" stroke-linecap="round" stroke-linejoin="round" /><path d="M876.4,109.4 L880.6,113.6 M880.6,109.4 L876.4,113.6" stroke="#4f4f4f" stroke-width="2.2" fill="none" stroke-linecap="round" stroke-linejoin="round" /><path d="M876.6,109.6 L880.4,113.4 M880.4,109.6 L876.6,113.4" stroke="#707070" stroke-width="0.9" fill="none" stroke-linecap="round" stroke-linejoin="round" /><path d="M884.1,105.30000000000001 L887.4,102.10000000000001 L890.6999999999999,105.30000000000001" stroke="#707070" stroke-width="1.2" fill="none" stroke-linecap="round" stroke-linejoin="round" /><path d="M884.1,109.1 L887.4,112.3 L890.6999999999999,109.1" stroke="#707070" stroke-width="1.2" fill="none" stroke-linecap="round" stroke-linejoin="round" /><rect x="901.8" y="105.3" width="7.5" height="7.5" rx="0" fill="#ffffff" stroke="none" stroke-width="1" /><rect x="898.3" y="102.1" width="7.8" height="7.5" rx="0" fill="#4b8af2" stroke="#5c5c5c" stroke-width="0.5" /><path d="M914.7,105.50000000000001 L918,102.30000000000001 L921.3,105.50000000000001" stroke="#bcbcbc" stroke-width="1.2" fill="none" stroke-linecap="round" stroke-linejoin="round" /><path d="M914.7,109.3 L918,112.5 L921.3,109.3" stroke="#bcbcbc" stroke-width="1.2" fill="none" stroke-linecap="round" stroke-linejoin="round" /><rect x="714.2" y="124.2" width="11.5" height="10.8" rx="1.6" fill="none" stroke="#a8a8a8" stroke-width="1.0" /><path d="M714.4,129.6 H725.6 M716,126.9 H717.4 M716,132.3 H717.4" stroke="#a8a8a8" stroke-width="1.0" fill="none" stroke-linecap="round" stroke-linejoin="round" /><path d="M747.8,130.8 V125 a1.3,1.3 0 0 1 1.3,-1.3 H757.4 a1.3,1.3 0 0 1 1.3,1.3 V130 M753.6,134.8 H751.4 L747.8,130.8" stroke="#b8b8b8" stroke-width="1.05" fill="none" stroke-linecap="round" stroke-linejoin="round" /><path d="M747.8,130.8 h3.8 v4 z" stroke="none" stroke-width="1.1" fill="#b8b8b8" stroke-linecap="round" stroke-linejoin="round" /><circle cx="757.8" cy="134" r="3.0" fill="#666666" stroke="#bdbdbd" stroke-width="1.0" /><path d="M756.0999999999999,134 h3.4 M757.8,132.3 v3.4" stroke="#c8c8c8" stroke-width="1.0" fill="none" stroke-linecap="round" stroke-linejoin="round" /><path d="M770.5,133 V125 a1.3,1.3 0 0 1 1.3,-1.3 H780 a1.3,1.3 0 0 1 1.3,1.3 V130 M776.4,134.8 H772 a1.4,1.4 0 0 1 -1.5,-1.6" stroke="#b8b8b8" stroke-width="1.05" fill="none" stroke-linecap="round" stroke-linejoin="round" /><circle cx="775.8" cy="128.8" r="2.7" fill="none" stroke="#b0b0b0" stroke-width="0.9" /><path d="M774.4,131.4 v-2.6 a1.4,1.4 0 0 1 2.8,0 v2.6 M772.6,133 c0.8,-1.2 1.4,-1.6 2,-1.8 M779,132 c-0.6,-0.6 -1,-0.8 -1.8,-0.8" stroke="#b0b0b0" stroke-width="0.8" fill="none" stroke-linecap="round" stroke-linejoin="round" /><circle cx="780.5" cy="134" r="3.0" fill="#666666" stroke="#bdbdbd" stroke-width="1.0" /><path d="M778.8,134 h3.4 M780.5,132.3 v3.4" stroke="#c8c8c8" stroke-width="1.0" fill="none" stroke-linecap="round" stroke-linejoin="round" /><path d="M792.4,133.2 V125 a0.9,0.9 0 0 1 0.9,-0.9 H797 l1.6,1.8 H803 a0.9,0.9 0 0 1 0.9,0.9 V130 L801,133.6 H793 Z" stroke="#c4c4c4" stroke-width="0.8" fill="#c4c4c4" stroke-linecap="round" stroke-linejoin="round" /><path d="M793,124.9 H797.2" stroke="#4a4a4a" stroke-width="0.0" fill="none" stroke-linecap="round" stroke-linejoin="round" /><circle cx="803.3" cy="134.2" r="3.0" fill="#666666" stroke="#bdbdbd" stroke-width="1.0" /><path d="M801.5999999999999,134.2 h3.4 M803.3,132.5 v3.4" stroke="#c8c8c8" stroke-width="1.0" fill="none" stroke-linecap="round" stroke-linejoin="round" /><rect x="821.4" y="123.4" width="6.6" height="6.6" rx="1.2" fill="none" stroke="#707070" stroke-width="0.9" /><rect x="815.4" y="128.6" width="7.4" height="7.2" rx="1.2" fill="none" stroke="#707070" stroke-width="0.9" /><rect x="823.4" y="125.4" width="2.6" height="2.6" rx="0" fill="#707070" stroke="none" stroke-width="1" /><path d="M821.4,130.2 L818.6,133 M818.4,131.2 V133.2 H820.4" stroke="#707070" stroke-width="0.9" fill="none" stroke-linecap="round" stroke-linejoin="round" /><rect x="843.8" y="123.6" width="7" height="7" rx="1.2" fill="none" stroke="#c4c4c4" stroke-width="1.0" /><rect x="838.2" y="128.6" width="7.2" height="7.2" rx="1.2" fill="none" stroke="#c4c4c4" stroke-width="1.0" /><rect x="840.2" y="130.8" width="2.8" height="2.8" rx="0" fill="#d0d0d0" stroke="none" stroke-width="1" /><path d="M846,128.2 L843.2,131 M843,129 V131.2 H845.2" stroke="#c4c4c4" stroke-width="0.9" fill="none" stroke-linecap="round" stroke-linejoin="round" /><rect x="861.6" y="124.1" width="11.4" height="10.9" rx="1.4" fill="#c8c8c8" stroke="none" stroke-width="1" /><circle cx="867.2" cy="129.5" r="3.2" fill="#3c3c3c" stroke="none" stroke-width="1" /><rect x="883.4" y="124.2" width="8.4" height="10.6" rx="1.2" fill="none" stroke="#707070" stroke-width="0.9" /><rect x="888.6" y="127.6" width="8.6" height="7.4" rx="1" fill="#4a4a4a" stroke="#707070" stroke-width="0.9" /><circle cx="893" cy="131.4" r="1.9" fill="#707070" stroke="none" stroke-width="1" /><path d="M885,129.6 h2.6 M886.3,128.3 v2.6" stroke="#707070" stroke-width="0.8" fill="none" stroke-linecap="round" stroke-linejoin="round" /><rect x="888.8" y="127.7" width="8.2" height="1.8" rx="0" fill="#707070" stroke="none" stroke-width="1" /><path d="M908.4,125.6 H917.2 M911.2,125.4 c0,-2 3.2,-2 3.2,0" stroke="#c4c4c4" stroke-width="1.0" fill="none" stroke-linecap="round" stroke-linejoin="round" /><path d="M909.4,126.4 L910,134.2 a1,1 0 0 0 1,0.9 H914.6 a1,1 0 0 0 1,-0.9 L916.2,126.4" stroke="#c4c4c4" stroke-width="1.0" fill="none" stroke-linecap="round" stroke-linejoin="round" /><path d="M911.4,127.8 V133.4 M912.8,127.8 V133.4 M914.2,127.8 V133.4" stroke="#c4c4c4" stroke-width="0.8" fill="none" stroke-linecap="round" stroke-linejoin="round" /><path d="M712.6999999999999,155.6 c3,-4.6 8.2,-4.6 11.2,0" stroke="#b8b8b8" stroke-width="1.2" fill="none" stroke-linecap="round" stroke-linejoin="round" /><path d="M713.0999999999999,156.0 c2.6,3.2 7.8,3.2 10.4,0" stroke="#a0a0a0" stroke-width="0.8" fill="none" stroke-linecap="round" stroke-linejoin="round" /><circle cx="718.3" cy="155.5" r="2.0" fill="#bcbcbc" stroke="none" stroke-width="1" /><path d="M712.6999999999999,181.6 c3,-4.6 8.2,-4.6 11.2,0" stroke="#b8b8b8" stroke-width="1.2" fill="none" stroke-linecap="round" stroke-linejoin="round" /><path d="M713.0999999999999,182.0 c2.6,3.2 7.8,3.2 10.4,0" stroke="#a0a0a0" stroke-width="0.8" fill="none" stroke-linecap="round" stroke-linejoin="round" /><circle cx="718.3" cy="181.5" r="2.0" fill="#bcbcbc" stroke="none" stroke-width="1" /><path d="M741.2,151.4 L734.2,157.8" stroke="#bdbdbd" stroke-width="2.0" fill="none" stroke-linecap="round" stroke-linejoin="round" stroke-linecap="butt"/><path d="M733.6,156.8 L735,158.6 L732.6,159.4 Z" stroke="#bdbdbd" stroke-width="0.4" fill="#bdbdbd" stroke-linecap="round" stroke-linejoin="round" /><path d="M731.6,160.6 H742.6" stroke="#bdbdbd" stroke-width="1.0" fill="none" stroke-linecap="round" stroke-linejoin="round" /><rect x="735.6" y="178.2" width="6.7" height="6.9" rx="1.3" fill="#343434" stroke="#545454" stroke-width="0.8" /><rect x="791.5" y="172.3" width="13.3" height="13.3" rx="1.4" fill="#f2f2f2" stroke="none" stroke-width="1" /><path d="M794.2,175 a0.9,0.9 0 0 1 0.9,-0.9 H801.4 a0.9,0.9 0 0 1 0.9,0.9 V182.8 a0.9,0.9 0 0 1 -0.9,0.9 H797.4 L794.2,180.6 Z" stroke="#3a3a3a" stroke-width="1.0" fill="none" stroke-linecap="round" stroke-linejoin="round" /><path d="M794.2,180.6 h3.2 v3.1 z" stroke="#3a3a3a" stroke-width="0.5" fill="#3a3a3a" stroke-linecap="round" stroke-linejoin="round" /><rect x="907.6" y="152.75000000000003" width="6.2" height="0.9" rx="0" fill="#3a3f5c" stroke="none" stroke-width="1" /><rect x="907.6" y="154.95000000000002" width="6.2" height="0.9" rx="0" fill="#3a3f5c" stroke="none" stroke-width="1" /><rect x="907.6" y="157.15" width="6.2" height="0.9" rx="0" fill="#3a3f5c" stroke="none" stroke-width="1" /><rect x="907.6" y="179.15000000000003" width="6.2" height="0.9" rx="0" fill="#2c2c2c" stroke="none" stroke-width="1" /><rect x="907.6" y="181.35000000000002" width="6.2" height="0.9" rx="0" fill="#2c2c2c" stroke="none" stroke-width="1" /><rect x="907.6" y="183.55" width="6.2" height="0.9" rx="0" fill="#2c2c2c" stroke="none" stroke-width="1" /><path d="M935.2,77.8 V67.4 a1,1 0 0 1 1,-1 H940.4 l1,1.4 H948.4 a1,1 0 0 1 1,1 V77.8 a1,1 0 0 1 -1,1 H936.2 a1,1 0 0 1 -1,-1 Z" stroke="#7c7c7c" stroke-width="1.0" fill="none" stroke-linecap="round" stroke-linejoin="round" /><rect x="938.2" y="69.8" width="1.7" height="1.5" rx="0" fill="#7c7c7c" stroke="none" stroke-width="1" /><rect x="941.5" y="69.8" width="1.7" height="1.5" rx="0" fill="#7c7c7c" stroke="none" stroke-width="1" /><rect x="944.8000000000001" y="69.8" width="1.7" height="1.5" rx="0" fill="#7c7c7c" stroke="none" stroke-width="1" /><rect x="938.2" y="72.7" width="1.7" height="1.5" rx="0" fill="#7c7c7c" stroke="none" stroke-width="1" /><rect x="941.5" y="72.7" width="1.7" height="1.5" rx="0" fill="#7c7c7c" stroke="none" stroke-width="1" /><rect x="944.8000000000001" y="72.7" width="1.7" height="1.5" rx="0" fill="#7c7c7c" stroke="none" stroke-width="1" /><rect x="938.2" y="75.6" width="1.7" height="1.5" rx="0" fill="#7c7c7c" stroke="none" stroke-width="1" /><rect x="941.5" y="75.6" width="1.7" height="1.5" rx="0" fill="#7c7c7c" stroke="none" stroke-width="1" /><rect x="944.8000000000001" y="75.6" width="1.7" height="1.5" rx="0" fill="#7c7c7c" stroke="none" stroke-width="1" /><path d="M941.6,99.8 L947.2,103 L941.6,106.2 L936.0,103 Z" stroke="#777777" stroke-width="0.95" fill="none" stroke-linecap="round" stroke-linejoin="round" /><path d="M936.0,105.7 L941.6,108.9 L947.2,105.7" stroke="#777777" stroke-width="0.95" fill="none" stroke-linecap="round" stroke-linejoin="round" /><path d="M936.0,108.4 L941.6,111.60000000000001 L947.2,108.4" stroke="#777777" stroke-width="0.95" fill="none" stroke-linecap="round" stroke-linejoin="round" /><rect x="943.4" y="107.2" width="7.6" height="8" rx="0" fill="#4c4c4c" stroke="none" stroke-width="1" /><rect x="944" y="108.2" width="1.8" height="2.2" rx="0" fill="none" stroke="#777" stroke-width="0.7" /><circle cx="948.6" cy="109.2" r="1.1" fill="#777" stroke="none" stroke-width="1" /><path d="M944,112 l2,2.4 M946,112 l-2,2.4" stroke="#777" stroke-width="0.7" fill="none" stroke-linecap="round" stroke-linejoin="round" /><rect x="947.6" y="111.8" width="2.2" height="2.6" rx="0" fill="none" stroke="#777" stroke-width="0.7" /><rect x="935.6" y="138.2" width="12.4" height="8.8" rx="1.2" fill="none" stroke="#7c7c7c" stroke-width="1.0" /><path d="M935.8,137.2 L948,134 M935.8,140.6 H948" stroke="#7c7c7c" stroke-width="1.1" fill="none" stroke-linecap="round" stroke-linejoin="round" /><path d="M940.4,141.8 V145.4 L943.6,143.6 Z" stroke="#7c7c7c" stroke-width="0.5" fill="#7c7c7c" stroke-linecap="round" stroke-linejoin="round" /><circle cx="942.2" cy="174.7" r="7.2" fill="none" stroke="#808080" stroke-width="1.0" /><rect x="941.4" y="173.4" width="1.7" height="5.2" rx="0.5" fill="#8a8a8a" stroke="none" stroke-width="1" /><circle cx="942.2" cy="171" r="1.05" fill="#8a8a8a" stroke="none" stroke-width="1" /><path d="M942,202.7 L947.9,206 L942,209.3 L936.1,206 Z" stroke="#c8c8c8" stroke-width="1.0" fill="none" stroke-linecap="round" stroke-linejoin="round" /><path d="M936.1,209.2 L942,212.5 L947.9,209.2" stroke="#c8c8c8" stroke-width="1.0" fill="none" stroke-linecap="round" stroke-linejoin="round" /><path d="M936.1,212.4 L942,215.70000000000002 L947.9,212.4" stroke="#c8c8c8" stroke-width="1.0" fill="none" stroke-linecap="round" stroke-linejoin="round" /><path d="M835.6,8.6 a7.6,7.6 0 0 1 10.6,0" stroke="#f2f2f2" stroke-width="1.5" fill="none" stroke-linecap="round" stroke-linejoin="round" /><path d="M837.7,10.8 a4.6,4.6 0 0 1 6.4,0" stroke="#f2f2f2" stroke-width="1.5" fill="none" stroke-linecap="round" stroke-linejoin="round" /><circle cx="840.9" cy="13" r="1.2" fill="#f2f2f2" stroke="none" stroke-width="1" /><path d="M839.6,12.4 a2,2 0 0 1 2.6,0" stroke="#f2f2f2" stroke-width="1.2" fill="none" stroke-linecap="round" stroke-linejoin="round" /><rect x="849.3" y="5.9" width="16.4" height="8" rx="1.8" fill="none" stroke="#f2f2f2" stroke-width="0.9" /><text x="857.5" y="12.5" font-size="5.9" font-weight="bold" text-anchor="middle" fill="#f2f2f2" font-family="Liberation Sans" letter-spacing="0.2">VPN</text><path d="M872.6,5.7 a4.3,4.3 0 1 0 4.6,6.2 a3.9,3.9 0 0 1 -4.6,-6.2 Z" stroke="#f2f2f2" stroke-width="0.6" fill="#f2f2f2" stroke-linecap="round" stroke-linejoin="round" /><path d="M883,13.2 V10.2 a3.4,3.4 0 0 1 6.8,0 V13.2" stroke="#f2f2f2" stroke-width="1.3" fill="none" stroke-linecap="round" stroke-linejoin="round" /><rect x="882.3" y="10.4" width="2.2" height="3.4" rx="0.8" fill="#f2f2f2" stroke="none" stroke-width="1" /><rect x="888.3" y="10.4" width="2.2" height="3.4" rx="0.8" fill="#f2f2f2" stroke="none" stroke-width="1" /><rect x="891.7" y="6.6" width="2.6" height="7.2" rx="0.6" fill="none" stroke="#f2f2f2" stroke-width="0.7" /><rect x="892.3" y="8" width="1.4" height="5.3" rx="0" fill="#f2f2f2" stroke="none" stroke-width="1" /><rect x="892.4" y="5.9" width="1.2" height="0.7" rx="0" fill="#f2f2f2" stroke="none" stroke-width="1" /><rect x="926.9" y="5.5" width="18.6" height="8.9" rx="2.4" fill="none" stroke="#a8a8a8" stroke-width="0.9" /><rect x="928.3" y="6.9" width="15.8" height="6.1" rx="1.3" fill="#ffffff" stroke="none" stroke-width="1" /><path d="M946.6,8.6 v2.8" stroke="#a8a8a8" stroke-width="1.2" fill="none" stroke-linecap="round" stroke-linejoin="round" /><path d="M75.2,28.3 H70.8 C67.6,28.3 67.4,25.5 69.6,24.5 C72.2,23.3 77,23.1 79.3,24.9 C81.4,26.7 80.8,29.9 78.2,31.1 C76.2,32 73.6,32.2 72.8,33.2 C72.4,34 73.6,34.9 75,35.5" stroke="#c6c6c6" stroke-width="2.2" fill="none" stroke-linecap="round" stroke-linejoin="round" /></svg>
</div></body></html>
